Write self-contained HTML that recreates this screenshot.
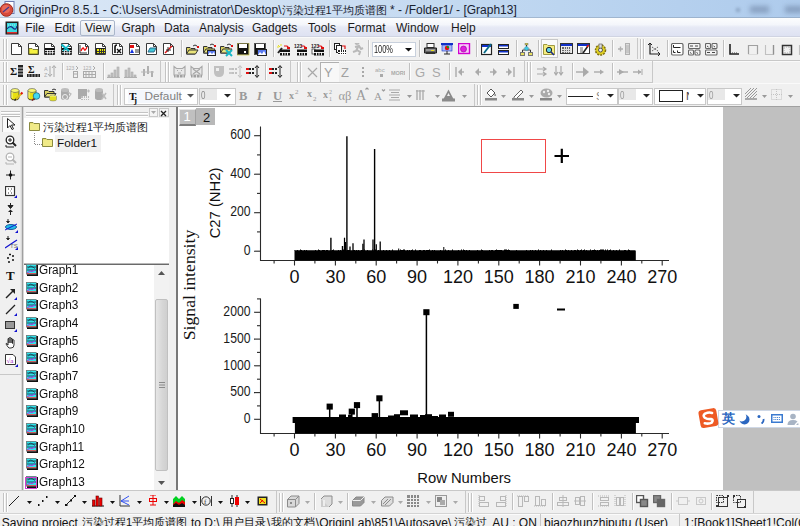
<!DOCTYPE html>
<html><head><meta charset="utf-8"><style>
html,body{margin:0;padding:0;width:800px;height:526px;overflow:hidden;background:#f0f0f0}
body{position:relative;font-family:"Liberation Sans", sans-serif}
div,span,svg{position:absolute;display:block}
span{white-space:nowrap;line-height:1}
</style></head><body>
<div style="left:0px;top:0px;width:800px;height:18px;background:linear-gradient(90deg,#dae7f6 0%,#cfe0f3 35%,#bcd5f0 70%,#aecbec 100%)"></div>
<svg style="left:0px;top:1px;" width="16" height="16" viewBox="0 0 16 16"><rect x="5" y="0.5" width="9" height="12" fill="#fff" stroke="#6a7ab0"/><circle cx="6.5" cy="9" r="6.3" fill="#d84a3a" stroke="#a03020"/><circle cx="6" cy="8" r="4" fill="#e86a5a"/><path d="M3 11L9 6" stroke="#4a3a8a" stroke-width="1.3"/></svg>
<span style="left:18.8px;top:3.5px;font-size:12px;color:#1a2230">OriginPro 8.5.1 - C:\Users\Administrator\Desktop\<span style="position:static;display:inline;font-size:11px">污染过程1平均质谱图</span> * - /Folder1/ - [Graph13]</span>
<div style="left:750px;top:6px;width:19px;height:7px;background:rgba(70,90,120,0.38);filter:blur(2.5px)"></div>
<div style="left:785px;top:6px;width:18px;height:7px;background:rgba(70,90,120,0.38);filter:blur(2.5px)"></div>
<div style="left:736px;top:8px;width:4px;height:4px;background:rgba(60,80,110,0.3);filter:blur(1.5px)"></div>
<div style="left:0px;top:17px;width:800px;height:1px;background:linear-gradient(90deg,#b8c8da,#98b0cc)"></div>
<div style="left:0px;top:18px;width:800px;height:19px;background:linear-gradient(180deg,#fcfdfe 0%,#f4f6fb 35%,#e6e9f5 48%,#dde1f2 100%)"></div>
<div style="left:0px;top:36px;width:800px;height:1px;background:#d0d4e2"></div>
<svg style="left:5px;top:21px;" width="15" height="15" viewBox="0 0 15 15"><rect x="0.5" y="0.5" width="13" height="13" fill="#222"/><rect x="2" y="2" width="10" height="9" fill="#3ad8e0"/><path d="M2 8Q5 4 8 7T12 5" stroke="#1a2a8a" fill="none" stroke-width="1.2"/><path d="M3 4H11" stroke="#fff" stroke-width="0.6" stroke-dasharray="1 1"/><rect x="2" y="11" width="10" height="1.5" fill="#e03030"/></svg>
<div style="left:80px;top:20px;width:35px;height:16px;border:1px solid #aab6ca;border-radius:2px;background:linear-gradient(#f8f9fb,#e2e7ef);box-sizing:border-box"></div>
<span style="left:25.3px;top:22px;font-size:12px;color:#1b1b1b">File</span>
<span style="left:54.4px;top:22px;font-size:12px;color:#1b1b1b">Edit</span>
<span style="left:85px;top:22px;font-size:12px;color:#1b1b1b">View</span>
<span style="left:121.5px;top:22px;font-size:12px;color:#1b1b1b">Graph</span>
<span style="left:164px;top:22px;font-size:12px;color:#1b1b1b">Data</span>
<span style="left:199px;top:22px;font-size:12px;color:#1b1b1b">Analysis</span>
<span style="left:252px;top:22px;font-size:12px;color:#1b1b1b">Gadgets</span>
<span style="left:308px;top:22px;font-size:12px;color:#1b1b1b">Tools</span>
<span style="left:347.5px;top:22px;font-size:12px;color:#1b1b1b">Format</span>
<span style="left:396px;top:22px;font-size:12px;color:#1b1b1b">Window</span>
<span style="left:451px;top:22px;font-size:12px;color:#1b1b1b">Help</span>
<div style="left:0px;top:37px;width:800px;height:70px;background:#f0f0f0"></div>
<div style="left:0px;top:37px;width:800px;height:1px;background:#fafafa"></div>
<div style="left:0px;top:60px;width:800px;height:1px;background:#c8c8c8"></div>
<div style="left:0px;top:61px;width:800px;height:1px;background:#fafafa"></div>
<div style="left:0px;top:82px;width:653px;height:1px;background:#c8c8c8"></div>
<div style="left:653px;top:83px;width:147px;height:1px;background:#e4e4e4"></div>
<div style="left:0px;top:83px;width:800px;height:1px;background:#fafafa"></div>
<div style="left:0px;top:106px;width:800px;height:1px;background:#a0a0a0"></div>
<div style="left:3px;top:39px;width:1px;height:20px;background:#c4c4c4"></div>
<div style="left:4px;top:39px;width:1px;height:20px;background:#fff"></div>
<div style="left:6px;top:39px;width:1px;height:20px;background:#c4c4c4"></div>
<div style="left:7px;top:39px;width:1px;height:20px;background:#fff"></div>
<svg style="left:11px;top:43px;" width="15" height="15" viewBox="0 0 15 15"><path d="M0.5 0.5H7.5L10.5 3.5V11.5H0.5Z" fill="#fff" stroke="#3a3a3a"/><path d="M7.5 0.5V3.5H10.5" fill="none" stroke="#3a3a3a"/></svg>
<svg style="left:28px;top:43px;" width="15" height="15" viewBox="0 0 15 15"><path d="M0.5 0.5H7.5L10.5 3.5V11.5H0.5Z" fill="#fff" stroke="#3a3a3a"/><path d="M7.5 0.5V3.5H10.5" fill="none" stroke="#3a3a3a"/><path d="M1 5.5H4L5 6.5H10V11H1Z" fill="#f4f040" stroke="#6a6a20" stroke-width="0.8"/></svg>
<svg style="left:44px;top:43px;" width="15" height="15" viewBox="0 0 15 15"><path d="M0.5 0.5H7.5L10.5 3.5V11.5H0.5Z" fill="#fff" stroke="#3a3a3a"/><path d="M7.5 0.5V3.5H10.5" fill="none" stroke="#3a3a3a"/><rect x="1" y="5" width="9.5" height="6.5" fill="#111"/><path d="M1 7.5H10.5M1 9.7H10.5M3.5 7V11.5M6 7V11.5M8.5 7V11.5" stroke="#fff" stroke-width="0.8"/></svg>
<svg style="left:61px;top:43px;" width="15" height="15" viewBox="0 0 15 15"><path d="M0.5 0.5H7.5L10.5 3.5V11.5H0.5Z" fill="#fff" stroke="#3a3a3a"/><path d="M7.5 0.5V3.5H10.5" fill="none" stroke="#3a3a3a"/><rect x="1" y="5" width="9.5" height="6.5" fill="#111"/><path d="M1 7.5H10.5M1 9.7H10.5M3.5 7V11.5M6 7V11.5M8.5 7V11.5" stroke="#fff" stroke-width="0.8"/><path d="M0.5 1.5L8 8" stroke="#10b8c8" stroke-width="2.2"/><path d="M2 8L8 2" stroke="#10b8c8" stroke-width="1.4"/></svg>
<svg style="left:78px;top:43px;" width="15" height="15" viewBox="0 0 15 15"><path d="M0.5 0.5H7.5L10.5 3.5V11.5H0.5Z" fill="#fff" stroke="#3a3a3a"/><path d="M7.5 0.5V3.5H10.5" fill="none" stroke="#3a3a3a"/><path d="M2 2V10H9" stroke="#333" fill="none"/><path d="M3 8Q5 3 6 6T9 4" stroke="#e00" fill="none" stroke-width="1.2"/></svg>
<svg style="left:95px;top:43px;" width="15" height="15" viewBox="0 0 15 15"><path d="M0.5 0.5H7.5L10.5 3.5V11.5H0.5Z" fill="#fff" stroke="#3a3a3a"/><path d="M7.5 0.5V3.5H10.5" fill="none" stroke="#3a3a3a"/><rect x="1" y="5" width="9" height="6" fill="#222"/><rect x="2" y="6" width="8" height="5" fill="#f2f200"/><rect x="4" y="6" width="1" height="5" fill="#333"/><rect x="6" y="6" width="1" height="5" fill="#333"/><rect x="8" y="6" width="1" height="5" fill="#333"/><rect x="2" y="8" width="8" height="1" fill="#333"/><rect x="2" y="10" width="8" height="1" fill="#333"/></svg>
<svg style="left:112px;top:43px;" width="15" height="15" viewBox="0 0 15 15"><path d="M0.5 0.5H7.5L10.5 3.5V11.5H0.5Z" fill="#fff" stroke="#3a3a3a"/><path d="M7.5 0.5V3.5H10.5" fill="none" stroke="#3a3a3a"/><path d="M3 10V4Q3 2 5 2" stroke="#111" fill="none" stroke-width="1.6"/><path d="M5 6L9 10M9 6L5 10" stroke="#111" stroke-width="1.4"/></svg>
<svg style="left:129px;top:43px;" width="15" height="15" viewBox="0 0 15 15"><path d="M0.5 0.5H7.5L10.5 3.5V11.5H0.5Z" fill="#fff" stroke="#3a3a3a"/><path d="M7.5 0.5V3.5H10.5" fill="none" stroke="#3a3a3a"/><rect x="1" y="2" width="4" height="3" fill="#e01010"/><path d="M1 10L3 6L5 10Z" fill="#1030e0"/><path d="M6 7H10M6 9H10" stroke="#333"/></svg>
<svg style="left:146px;top:43px;" width="15" height="15" viewBox="0 0 15 15"><path d="M0.5 0.5H7.5L10.5 3.5V11.5H0.5Z" fill="#fff" stroke="#3a3a3a"/><path d="M7.5 0.5V3.5H10.5" fill="none" stroke="#3a3a3a"/><path d="M2 9L4 5H10L8 9Z" fill="#40c8d8" stroke="#2a6a8a"/></svg>
<svg style="left:163px;top:43px;" width="15" height="15" viewBox="0 0 15 15"><path d="M0.5 0.5H7.5L10.5 3.5V11.5H0.5Z" fill="#fff" stroke="#3a3a3a"/><path d="M7.5 0.5V3.5H10.5" fill="none" stroke="#3a3a3a"/><path d="M2 10L9 3" stroke="#e01010" stroke-width="1.4"/><path d="M5 4V9M3 7H8" stroke="#333"/></svg>
<div style="left:181px;top:40px;width:1px;height:17px;background:#c0c0c0"></div>
<div style="left:182px;top:40px;width:1px;height:17px;background:#fdfdfd"></div>
<svg style="left:186px;top:43px;" width="15" height="15" viewBox="0 0 15 15"><path d="M0.5 4.5H4L5 5.5H9V11H0.5Z" fill="#d8d060" stroke="#333"/><path d="M0.5 11L3 7H12L9.5 11Z" fill="#eae47a" stroke="#333"/><path d="M7 3Q9 1 11 3" stroke="#333" fill="none"/><rect x="11" y="3" width="2" height="2" fill="#e01010"/></svg>
<svg style="left:203px;top:43px;" width="15" height="15" viewBox="0 0 15 15"><path d="M0.5 3.5H4L5 4.5H9V10H0.5Z" fill="#d8d060" stroke="#333"/><path d="M0.5 10L3 6H12L9.5 10Z" fill="#eae47a" stroke="#333"/><path d="M7 2Q9 0 11 2" stroke="#333" fill="none"/><rect x="11" y="2" width="2" height="2" fill="#e01010"/><rect x="4.5" y="7.5" width="8" height="5" fill="#5a7af0" stroke="#222"/><path d="M5 12L7 9L9 11L11 9L12 12Z" fill="#fff"/></svg>
<svg style="left:220px;top:43px;" width="15" height="15" viewBox="0 0 15 15"><path d="M0.5 3.5H4L5 4.5H9V10H0.5Z" fill="#d8d060" stroke="#333"/><path d="M0.5 10L3 6H12L9.5 10Z" fill="#eae47a" stroke="#333"/><path d="M7 2Q9 0 11 2" stroke="#333" fill="none"/><rect x="11" y="2" width="2" height="2" fill="#e01010"/><path d="M6 7L12 13M12 7L6 13" stroke="#19b8c8" stroke-width="2"/></svg>
<svg style="left:237px;top:43px;" width="15" height="15" viewBox="0 0 15 15"><rect x="0.5" y="0.5" width="11" height="11" fill="#111" stroke="#555"/><rect x="2" y="1" width="8" height="4" fill="#fff"/><rect x="7" y="8" width="2" height="2" fill="#fff"/><rect x="0" y="0" width="12" height="12" fill="none" stroke="#c8c020" stroke-width="0.6"/></svg>
<svg style="left:254px;top:43px;" width="15" height="15" viewBox="0 0 15 15"><rect x="0.5" y="0.5" width="11" height="11" fill="#111" stroke="#555"/><rect x="2" y="1" width="8" height="4" fill="#fff"/><rect x="3.5" y="6.5" width="9" height="6" fill="#5a7af0" stroke="#222"/><path d="M4 12L6 9L8 11L10 8L12 12Z" fill="#fff"/></svg>
<div style="left:273px;top:40px;width:1px;height:17px;background:#c0c0c0"></div>
<div style="left:274px;top:40px;width:1px;height:17px;background:#fdfdfd"></div>
<svg style="left:277px;top:43px;" width="15" height="15" viewBox="0 0 15 15"><path d="M1 2L3 4M4 1V3M0 4H2" stroke="#e8e020"/><path d="M1 10L5 5" stroke="#222" stroke-width="2"/><rect x="3" y="6.5" width="10" height="6" fill="#111"/><path d="M3 9.5H13M5.5 9V12.5M8 9V12.5M10.5 9V12.5" stroke="#fff" stroke-width="0.9"/><path d="M7 3H10L12 5" stroke="#e01010" fill="none" stroke-width="1.2"/><rect x="10" y="4" width="3" height="2" fill="#e01010"/></svg>
<svg style="left:294px;top:43px;" width="15" height="15" viewBox="0 0 15 15"><text x="0" y="5" font-size="5" font-family="Liberation Sans" font-weight="bold" fill="#222">123</text><rect x="3" y="6.5" width="10" height="6" fill="#111"/><path d="M3 9.5H13M5.5 9V12.5M8 9V12.5M10.5 9V12.5" stroke="#fff" stroke-width="0.9"/><path d="M7 3H10L12 5" stroke="#e01010" fill="none" stroke-width="1.2"/><rect x="10" y="4" width="3" height="2" fill="#e01010"/></svg>
<svg style="left:311px;top:43px;" width="15" height="15" viewBox="0 0 15 15"><text x="0" y="5" font-size="5" font-family="Liberation Sans" font-weight="bold" fill="#222">123</text><rect x="1" y="6" width="3" height="5" fill="#fff" stroke="#222" stroke-width="0.7"/><rect x="3" y="6.5" width="10" height="6" fill="#111"/><path d="M3 9.5H13M5.5 9V12.5M8 9V12.5M10.5 9V12.5" stroke="#fff" stroke-width="0.9"/><path d="M7 3H10L12 5" stroke="#e01010" fill="none" stroke-width="1.2"/><rect x="10" y="4" width="3" height="2" fill="#e01010"/></svg>
<div style="left:329px;top:40px;width:1px;height:17px;background:#c0c0c0"></div>
<div style="left:330px;top:40px;width:1px;height:17px;background:#fdfdfd"></div>
<svg style="left:334px;top:43px;" width="15" height="15" viewBox="0 0 15 15"><rect x="0.5" y="0.5" width="5" height="6" fill="#fff" stroke="#222"/><rect x="2.5" y="2.5" width="5" height="7" fill="#fff" stroke="#222"/><rect x="4" y="7" width="8" height="5" fill="#222"/><rect x="6" y="7" width="1" height="5" fill="#fff"/><rect x="8" y="7" width="1" height="5" fill="#fff"/><rect x="10" y="7" width="1" height="5" fill="#fff"/><rect x="4" y="9" width="8" height="1" fill="#fff"/><rect x="4" y="11" width="8" height="1" fill="#fff"/><path d="M8 3H11V6" stroke="#e01010" fill="none" stroke-width="1.2"/></svg>
<svg style="left:351px;top:43px;" width="15" height="15" viewBox="0 0 15 15"><path d="M6 1a1.5 1.5 0 1 1 0.1 0M4 4L8 3L10 6L12 5M7 4L5 8L2 9M6 7L9 9L8 12" stroke="#b8b8b8" stroke-width="2" fill="none"/></svg>
<div style="left:368px;top:40px;width:1px;height:17px;background:#c0c0c0"></div>
<div style="left:369px;top:40px;width:1px;height:17px;background:#fdfdfd"></div>
<div style="left:371.5px;top:42px;width:44px;height:15px;background:#fff;border:1px solid #c8c8c8;box-sizing:border-box;border-color:#c8d0dc"></div>
<span style="left:374.4px;top:45px;font-size:10px;color:#222;transform:scaleX(0.74);transform-origin:0 0">100%</span>
<svg style="left:405px;top:48px;" width="7" height="4" viewBox="0 0 7 4"><path d="M0 0H7L3.5 3.5Z" fill="#111"/></svg>
<div style="left:419px;top:40px;width:1px;height:17px;background:#c0c0c0"></div>
<div style="left:420px;top:40px;width:1px;height:17px;background:#fdfdfd"></div>
<svg style="left:424px;top:43px;" width="15" height="15" viewBox="0 0 15 15"><rect x="3" y="0.5" width="7" height="4" fill="#fff" stroke="#333"/><path d="M0.5 5H12.5V10H0.5Z" fill="#666" stroke="#222"/><rect x="2" y="6" width="9" height="2" fill="#999"/><rect x="7" y="7" width="3" height="1" fill="#e8e020"/><rect x="2" y="9" width="9" height="2" fill="#333"/></svg>
<svg style="left:441px;top:43px;" width="15" height="15" viewBox="0 0 15 15"><rect x="0" y="0" width="12" height="2" fill="#1030c8"/><rect x="1" y="2" width="10" height="6" fill="#a8b8f8" stroke="#1030c8" stroke-width="0.6"/><circle cx="6" cy="5" r="2.2" fill="#e01010"/><path d="M6 5V2.8A2.2 2.2 0 0 1 8.2 5Z" fill="#10a010"/><path d="M6 8V11M3 11H9" stroke="#222"/></svg>
<svg style="left:458px;top:43px;" width="15" height="15" viewBox="0 0 15 15"><rect x="0.5" y="0.5" width="11" height="10" fill="#f8c8f8" stroke="#d000d0" stroke-width="1.4"/><circle cx="5.5" cy="6" r="3" fill="#e020e0" stroke="#900090" stroke-width="0.6"/></svg>
<div style="left:476px;top:40px;width:1px;height:17px;background:#c0c0c0"></div>
<div style="left:477px;top:40px;width:1px;height:17px;background:#fdfdfd"></div>
<svg style="left:481px;top:43px;" width="15" height="15" viewBox="0 0 15 15"><rect x="0.5" y="1.5" width="10" height="10" fill="#fff" stroke="#222" stroke-width="1.2"/><rect x="1" y="2" width="9" height="2" fill="#1030c8"/><path d="M3 10L10 1" stroke="#0a8ab0" stroke-width="2"/><path d="M3 10L10 1" stroke="#222" stroke-width="0.5"/></svg>
<svg style="left:497px;top:43px;" width="15" height="15" viewBox="0 0 15 15"><rect x="1.5" y="1.5" width="10" height="4" fill="#fff" stroke="#222"/><rect x="2" y="2" width="9" height="1.5" fill="#1030c8"/><rect x="1.5" y="7.5" width="10" height="4" fill="#fff" stroke="#222"/><rect x="2" y="8" width="9" height="1.5" fill="#1030c8"/></svg>
<div style="left:516px;top:40px;width:1px;height:17px;background:#c0c0c0"></div>
<div style="left:517px;top:40px;width:1px;height:17px;background:#fdfdfd"></div>
<svg style="left:520px;top:43px;" width="15" height="15" viewBox="0 0 15 15"><rect x="5" y="0" width="3" height="2" fill="#c8c040" stroke="#777" stroke-width="0.5"/><path d="M6.5 2V5M2.5 9V7H10.5V9" stroke="#333" fill="none"/><path d="M6.5 3L9 5.5L6.5 8L4 5.5Z" fill="#40c8e0" stroke="#2a7a9a" stroke-width="0.5"/><rect x="0.5" y="9.5" width="4" height="3" fill="#e8e060" stroke="#777"/><rect x="8.5" y="9.5" width="4" height="3" fill="#e8e060" stroke="#777"/></svg>
<div style="left:538px;top:40px;width:1px;height:17px;background:#c0c0c0"></div>
<div style="left:539px;top:40px;width:1px;height:17px;background:#fdfdfd"></div>
<div style="left:541px;top:39px;width:17px;height:19px;background:#fafafa;border:1px solid #c8c8c8;box-sizing:border-box"></div>
<svg style="left:543px;top:43px;" width="15" height="15" viewBox="0 0 15 15"><path d="M0.5 1.5H4L5 2.5H11.5V11.5H0.5Z" fill="#f4ec80" stroke="#a09a40"/><circle cx="6" cy="7" r="2.7" fill="#60d0e8" stroke="#222"/><path d="M8 9L11 12" stroke="#1a2a8a" stroke-width="1.6"/></svg>
<svg style="left:560px;top:43px;" width="15" height="15" viewBox="0 0 15 15"><rect x="0.5" y="0.5" width="12" height="10" fill="#eee" stroke="#333"/><rect x="1" y="1" width="11" height="2" fill="#1030c8"/><rect x="2" y="4" width="9" height="6" fill="#666"/><rect x="4" y="4" width="1" height="6" fill="#ddd"/><rect x="6" y="4" width="1" height="6" fill="#ddd"/><rect x="8" y="4" width="1" height="6" fill="#ddd"/><rect x="10" y="4" width="1" height="6" fill="#ddd"/><rect x="2" y="6" width="9" height="1" fill="#ddd"/><rect x="2" y="8" width="9" height="1" fill="#ddd"/></svg>
<svg style="left:577px;top:43px;" width="15" height="15" viewBox="0 0 15 15"><rect x="0.5" y="0.5" width="12" height="10" fill="#fff" stroke="#333"/><rect x="1" y="1" width="11" height="2" fill="#1030c8"/><path d="M3 5H6M3 7H6M3 9H6" stroke="#666"/><path d="M6 10L11 3" stroke="#222" stroke-width="1.6"/><path d="M10 4L11.5 2" stroke="#e01010" stroke-width="1.6"/></svg>
<svg style="left:594px;top:43px;" width="15" height="15" viewBox="0 0 15 15"><circle cx="6.5" cy="7" r="5" fill="#e0d020" stroke="#807010" stroke-width="1.5" stroke-dasharray="2 1"/><circle cx="6.5" cy="7" r="2" fill="#f0f0f0" stroke="#555"/><rect x="5" y="1" width="3" height="4" fill="#ddd" stroke="#555" stroke-width="0.6"/></svg>
<div style="left:612px;top:40px;width:1px;height:17px;background:#c0c0c0"></div>
<div style="left:613px;top:40px;width:1px;height:17px;background:#fdfdfd"></div>
<svg style="left:617px;top:43px;" width="15" height="15" viewBox="0 0 15 15"><path d="M1 6H6M3.5 3.5V8.5" stroke="#b0b0b0" stroke-width="1.4"/><rect x="8.5" y="0.5" width="4" height="11" fill="#ddd" stroke="#b0b0b0"/><path d="M9 3H12M9 5H12M9 7H12M9 9H12" stroke="#b0b0b0"/></svg>
<div style="left:637px;top:38px;width:1px;height:21px;background:#c8c8c8"></div>
<div style="left:640px;top:39px;width:1px;height:20px;background:#c4c4c4"></div>
<div style="left:641px;top:39px;width:1px;height:20px;background:#fff"></div>
<div style="left:643px;top:39px;width:1px;height:20px;background:#c4c4c4"></div>
<div style="left:644px;top:39px;width:1px;height:20px;background:#fff"></div>
<svg style="left:648px;top:43px;" width="15" height="15" viewBox="0 0 15 15"><path d="M2 0V11H12" stroke="#222" fill="none" stroke-width="1.2"/><path d="M0 2L2 0L4 2M10 9L12 11L10 13" stroke="#222" fill="none"/><path d="M4 4L10 8M4 8L10 4" stroke="#444" stroke-dasharray="1 1"/></svg>
<div style="left:667px;top:40px;width:1px;height:17px;background:#c0c0c0"></div>
<div style="left:668px;top:40px;width:1px;height:17px;background:#fdfdfd"></div>
<svg style="left:671px;top:43px;" width="15" height="15" viewBox="0 0 15 15"><rect x="0.5" y="0.5" width="11.5" height="11.5" rx="1.5" fill="#fff" stroke="#666" stroke-width="1.2"/><path d="M2.5 2V4.5H9.5M2.5 7.5V9.5H4.5M6.5 7.5V9.5H9.5" stroke="#222" fill="none"/></svg>
<svg style="left:688px;top:43px;" width="15" height="15" viewBox="0 0 15 15"><rect x="0.5" y="0.5" width="11.5" height="5" rx="1" fill="#f4f4f4" stroke="#666" stroke-width="1.1"/><rect x="0.5" y="7" width="5" height="5" rx="1" fill="#f4f4f4" stroke="#666" stroke-width="1.1"/><rect x="7" y="7" width="5" height="5" rx="1" fill="#f4f4f4" stroke="#666" stroke-width="1.1"/><path d="M2 3H5M7 3H10M2 9.5L3.5 10.5M8.5 9.5L10 10.5" stroke="#333" stroke-width="0.9"/></svg>
<svg style="left:705px;top:43px;" width="15" height="15" viewBox="0 0 15 15"><rect x="0.5" y="0.5" width="5" height="5" rx="1" fill="#f4f4f4" stroke="#666" stroke-width="1.1"/><rect x="7" y="0.5" width="5" height="5" rx="1" fill="#f4f4f4" stroke="#666" stroke-width="1.1"/><rect x="0.5" y="7" width="11.5" height="5" rx="1" fill="#f4f4f4" stroke="#666" stroke-width="1.1"/><path d="M2 3L3.5 4M8.5 3L10 4M2 9.5H5M7 9.5H10" stroke="#333" stroke-width="0.9"/></svg>
<div style="left:723px;top:40px;width:1px;height:17px;background:#c0c0c0"></div>
<div style="left:724px;top:40px;width:1px;height:17px;background:#fdfdfd"></div>
<svg style="left:729px;top:44px;" width="15" height="15" viewBox="0 0 15 15"><path d="M1 0V10H10" stroke="#222" fill="none" stroke-width="1.6"/><path d="M3 9H9" stroke="#444" stroke-dasharray="1 1"/></svg>
<svg style="left:747px;top:44px;" width="15" height="15" viewBox="0 0 15 15"><rect x="1.5" y="1.5" width="9" height="9" fill="none" stroke="#c8c8c8" stroke-dasharray="1 1"/><path d="M1 1.5H11M1.5 1V10M10.5 1V10" stroke="#a0a0a0" stroke-width="1.2"/></svg>
<svg style="left:764px;top:44px;" width="15" height="15" viewBox="0 0 15 15"><path d="M1.5 1V10.5H9.5V1" stroke="#c0c0c0" fill="none" stroke-width="1.1"/><path d="M9.5 1V10.5" stroke="#909090" stroke-width="1.3"/></svg>
<svg style="left:781px;top:44px;" width="15" height="15" viewBox="0 0 15 15"><rect x="1.5" y="1.5" width="9" height="9" fill="none" stroke="#333" stroke-width="1.5"/><rect x="3" y="3" width="6" height="6" fill="none" stroke="#aaa" stroke-dasharray="1 1"/></svg>
<svg style="left:798px;top:44px;" width="15" height="15" viewBox="0 0 15 15"><path d="M1.5 1V10.5H9.5V1" stroke="#c0c0c0" fill="none" stroke-width="1.1"/><path d="M9.5 1V10.5" stroke="#909090" stroke-width="1.3"/></svg>
<div style="left:3px;top:62px;width:1px;height:20px;background:#c4c4c4"></div>
<div style="left:4px;top:62px;width:1px;height:20px;background:#fff"></div>
<div style="left:6px;top:62px;width:1px;height:20px;background:#c4c4c4"></div>
<div style="left:7px;top:62px;width:1px;height:20px;background:#fff"></div>
<svg style="left:10px;top:65px;" width="15" height="15" viewBox="0 0 15 15"><text x="0" y="10" font-size="11" font-family="Liberation Serif" font-weight="bold" fill="#111">Σ</text><rect x="8" y="0" width="5" height="12" fill="#222"/><path d="M8 3H13M8 6H13M8 9H13" stroke="#fff" stroke-width="0.8"/></svg>
<svg style="left:27px;top:65px;" width="15" height="15" viewBox="0 0 15 15"><text x="1" y="8" font-size="10" font-family="Liberation Serif" font-weight="bold" fill="#111">Σ</text><rect x="0" y="9" width="13" height="3" fill="#222"/><path d="M2 9V12M5 9V12M8 9V12M11 9V12" stroke="#fff" stroke-width="0.6"/></svg>
<svg style="left:44px;top:65px;" width="15" height="15" viewBox="0 0 15 15"><text x="0" y="5.5" font-size="5.5" font-family="Liberation Sans" fill="#aaa">A</text><text x="0" y="12" font-size="5.5" font-family="Liberation Sans" fill="#aaa">Z</text><path d="M6 1V11M4 9L6 11.5L8 9M10 12V1M8 3L10 0.5L12 3" stroke="#aaa" fill="none"/></svg>
<div style="left:62px;top:63px;width:1px;height:17px;background:#c0c0c0"></div>
<div style="left:63px;top:63px;width:1px;height:17px;background:#fdfdfd"></div>
<svg style="left:66px;top:65px;" width="15" height="15" viewBox="0 0 15 15"><text x="0" y="4.5" font-size="5" font-family="Liberation Sans" fill="#aaa">123</text><path d="M10 1L12 3L10 5" stroke="#aaa" fill="none"/><rect x="7.5" y="6.5" width="4" height="6" fill="none" stroke="#aaa"/><path d="M8 9H11" stroke="#aaa"/></svg>
<svg style="left:83px;top:65px;" width="15" height="15" viewBox="0 0 15 15"><text x="0" y="4.5" font-size="5" font-family="Liberation Sans" fill="#aaa">123</text><path d="M10 1L12 3L10 5" stroke="#aaa" fill="none"/><rect x="0.5" y="6.5" width="12" height="6" fill="none" stroke="#aaa"/><path d="M3 7V12M6 7V12M9 7V12M1 9.5H12" stroke="#aaa"/></svg>
<div style="left:103px;top:63px;width:1px;height:17px;background:#c0c0c0"></div>
<div style="left:104px;top:63px;width:1px;height:17px;background:#fdfdfd"></div>
<svg style="left:107px;top:65px;" width="15" height="15" viewBox="0 0 15 15"><rect x="1" y="10" width="2" height="2" fill="#c4c4c4" stroke="#a8a8a8" stroke-width="0.6"/><rect x="4" y="8" width="2" height="4" fill="#c4c4c4" stroke="#a8a8a8" stroke-width="0.6"/><rect x="7" y="5" width="2" height="7" fill="#c4c4c4" stroke="#a8a8a8" stroke-width="0.6"/><rect x="10" y="2" width="2" height="10" fill="#c4c4c4" stroke="#a8a8a8" stroke-width="0.6"/><path d="M0 12.5H13" stroke="#b0b0b0"/></svg>
<svg style="left:124px;top:65px;" width="15" height="15" viewBox="0 0 15 15"><rect x="1" y="5" width="2" height="7" fill="#c4c4c4" stroke="#a8a8a8" stroke-width="0.6"/><rect x="4" y="3" width="2" height="9" fill="#c4c4c4" stroke="#a8a8a8" stroke-width="0.6"/><rect x="7" y="7" width="2" height="5" fill="#c4c4c4" stroke="#a8a8a8" stroke-width="0.6"/><rect x="10" y="10" width="2" height="2" fill="#c4c4c4" stroke="#a8a8a8" stroke-width="0.6"/><path d="M0 12.5H13" stroke="#b0b0b0"/></svg>
<svg style="left:141px;top:65px;" width="15" height="15" viewBox="0 0 15 15"><path d="M3 4V11M7 1V9M11 6V12" stroke="#b0b0b0" stroke-width="2"/><path d="M0 7H13" stroke="#b8b8b8"/></svg>
<div style="left:160px;top:61px;width:1px;height:22px;background:#c8c8c8"></div>
<div style="left:165px;top:62px;width:1px;height:20px;background:#c4c4c4"></div>
<div style="left:166px;top:62px;width:1px;height:20px;background:#fff"></div>
<div style="left:168px;top:62px;width:1px;height:20px;background:#c4c4c4"></div>
<div style="left:169px;top:62px;width:1px;height:20px;background:#fff"></div>
<svg style="left:173px;top:65px;" width="15" height="15" viewBox="0 0 15 15"><path d="M1 1.5L3.5 3.5H9.5L12 1.5V10H1Z" fill="#e8e8e8" stroke="#a8a8a8" stroke-width="1.1"/><path d="M1 10H12V12.5H1Z" fill="#a0a0a0"/><path d="M3 10V13M6.5 10V13M10 10V13" stroke="#f0f0f0" stroke-width="0.8"/><path d="M4 5.5H5M8 5.5H9M5 8H8" stroke="#a8a8a8" stroke-width="1.2"/></svg>
<svg style="left:190px;top:65px;" width="15" height="15" viewBox="0 0 15 15"><path d="M1 1.5L3.5 3.5H9.5L12 1.5V10H1Z" fill="#e8e8e8" stroke="#a8a8a8" stroke-width="1.1"/><path d="M1 10H12V12.5H1Z" fill="#a0a0a0"/><path d="M3 10V13M6.5 10V13M10 10V13" stroke="#f0f0f0" stroke-width="0.8"/><path d="M3 4L10 9M10 4L3 9" stroke="#a8a8a8" stroke-width="1.2"/></svg>
<div style="left:208px;top:63px;width:1px;height:17px;background:#c0c0c0"></div>
<div style="left:209px;top:63px;width:1px;height:17px;background:#fdfdfd"></div>
<svg style="left:213px;top:65px;" width="15" height="15" viewBox="0 0 15 15"><path d="M1 1H11V7Q11 12 6 12Q1 12 1 7Z" fill="#c0c0c0"/><rect x="3" y="3" width="3" height="3" fill="#eee"/></svg>
<svg style="left:229px;top:65px;" width="15" height="15" viewBox="0 0 15 15"><path d="M0 4H9M0 8H9" stroke="#c0c0c0" stroke-width="2" stroke-dasharray="2 1"/><rect x="0" y="3" width="3" height="2" fill="#c8c8c8"/><rect x="0" y="7" width="3" height="2" fill="#c8c8c8"/><path d="M11 1V12M9 3L11 0.5L13 3M9 10L11 12.5L13 10" stroke="#c0c0c0" fill="none"/></svg>
<svg style="left:246px;top:65px;" width="15" height="15" viewBox="0 0 15 15"><path d="M0 4H9M0 8H9" stroke="#222" stroke-width="2" stroke-dasharray="2 1"/><rect x="0" y="3" width="3" height="2" fill="#e01010"/><rect x="0" y="7" width="3" height="2" fill="#e01010"/><path d="M11 1V12M9 3L11 0.5L13 3M9 10L11 12.5L13 10" stroke="#222" fill="none"/></svg>
<div style="left:265px;top:63px;width:1px;height:17px;background:#c0c0c0"></div>
<div style="left:266px;top:63px;width:1px;height:17px;background:#fdfdfd"></div>
<svg style="left:269px;top:65px;" width="15" height="15" viewBox="0 0 15 15"><path d="M0 4H9M0 8H9" stroke="#222" stroke-width="2" stroke-dasharray="2 1"/><rect x="0" y="3" width="3" height="2" fill="#e01010"/><rect x="0" y="7" width="3" height="2" fill="#e01010"/><path d="M11 1V12M9 3L11 0.5L13 3M9 10L11 12.5L13 10" stroke="#222" fill="none"/></svg>
<div style="left:290px;top:61px;width:1px;height:22px;background:#c8c8c8"></div>
<div style="left:297px;top:62px;width:1px;height:20px;background:#c4c4c4"></div>
<div style="left:298px;top:62px;width:1px;height:20px;background:#fff"></div>
<div style="left:300px;top:62px;width:1px;height:20px;background:#c4c4c4"></div>
<div style="left:301px;top:62px;width:1px;height:20px;background:#fff"></div>
<svg style="left:307px;top:67px;" width="11" height="11" viewBox="0 0 11 11"><path d="M1 1L10 10M10 1L1 10" stroke="#a8a8a8" stroke-width="1.2"/></svg>
<div style="left:320px;top:62px;width:19px;height:20px;background:#f8f8f8;border-left:1px solid #b0b0b0;border-top:1px solid #b0b0b0;box-sizing:border-box"></div>
<span style="left:324px;top:66px;font-size:13px;color:#a0a0a0">Y</span>
<span style="left:341px;top:66px;font-size:13px;color:#a0a0a0">Z</span>
<svg style="left:361px;top:66px;" width="5" height="12" viewBox="0 0 5 12"><path d="M2 1V3M2 5V7M2 9V11" stroke="#a8a8a8" stroke-width="2"/></svg>
<svg style="left:375px;top:66px;" width="14" height="13" viewBox="0 0 14 13"><text x="0" y="6" font-size="6" font-family="Liberation Sans" fill="#aaa">abc</text><rect x="5" y="8" width="3" height="3" fill="#aaa"/></svg>
<svg style="left:391px;top:68px;" width="14" height="10" viewBox="0 0 14 10"><text x="0" y="7" font-size="5.5" font-family="Liberation Sans" font-weight="bold" fill="#aaa">MORE</text></svg>
<div style="left:409px;top:63px;width:1px;height:17px;background:#c0c0c0"></div>
<div style="left:410px;top:63px;width:1px;height:17px;background:#fdfdfd"></div>
<span style="left:415px;top:66px;font-size:13px;color:#a8a8a8">G</span>
<span style="left:432px;top:66px;font-size:13px;color:#a8a8a8">S</span>
<div style="left:449px;top:63px;width:1px;height:17px;background:#c0c0c0"></div>
<div style="left:450px;top:63px;width:1px;height:17px;background:#fdfdfd"></div>
<svg style="left:455px;top:66px;" width="15" height="15" viewBox="0 0 15 15"><path d="M1 1V11" stroke="#aaa" stroke-width="1.4"/><path d="M3 6L7 2V10Z" fill="#aaa"/><path d="M6 6H9" stroke="#aaa" stroke-width="1.4"/></svg>
<svg style="left:474px;top:66px;" width="15" height="15" viewBox="0 0 15 15"><path d="M1 6L5 2V10Z" fill="#aaa"/><path d="M4 6H7" stroke="#aaa" stroke-width="1.4"/></svg>
<svg style="left:490px;top:66px;" width="15" height="15" viewBox="0 0 15 15"><path d="M7 6L3 2V10Z" fill="#aaa"/><path d="M0 6H4" stroke="#aaa" stroke-width="1.4"/></svg>
<svg style="left:506px;top:66px;" width="15" height="15" viewBox="0 0 15 15"><path d="M8 1V11" stroke="#aaa" stroke-width="1.4"/><path d="M6 6L2 2V10Z" fill="#aaa"/><path d="M0 6H3" stroke="#aaa" stroke-width="1.4"/></svg>
<div style="left:524px;top:61px;width:1px;height:22px;background:#c8c8c8"></div>
<div style="left:527px;top:62px;width:1px;height:20px;background:#c4c4c4"></div>
<div style="left:528px;top:62px;width:1px;height:20px;background:#fff"></div>
<div style="left:530px;top:62px;width:1px;height:20px;background:#c4c4c4"></div>
<div style="left:531px;top:62px;width:1px;height:20px;background:#fff"></div>
<svg style="left:537px;top:66px;" width="15" height="15" viewBox="0 0 15 15"><path d="M0 3H8M0 8H8M6 1L9 3L6 5M6 6L9 8L6 10" stroke="#aaa" fill="none" stroke-width="1.2"/></svg>
<svg style="left:554px;top:66px;" width="15" height="15" viewBox="0 0 15 15"><path d="M2 0V9M7 0V9M0 6L2 9L4 6M5 6L7 9L9 6" stroke="#aaa" fill="none" stroke-width="1.2"/></svg>
<div style="left:572px;top:63px;width:1px;height:17px;background:#c0c0c0"></div>
<div style="left:573px;top:63px;width:1px;height:17px;background:#fdfdfd"></div>
<svg style="left:576px;top:66px;" width="15" height="15" viewBox="0 0 15 15"><path d="M0 6H8" stroke="#aaa" stroke-width="1.4"/><path d="M7 1L13 6L7 11Z" fill="#aaa"/></svg>
<svg style="left:594px;top:66px;" width="15" height="15" viewBox="0 0 15 15"><path d="M0 6H7" stroke="#aaa" stroke-width="1.4"/><path d="M6 3.5L10 6L6 8.5Z" fill="#aaa"/></svg>
<div style="left:612px;top:63px;width:1px;height:17px;background:#c0c0c0"></div>
<div style="left:613px;top:63px;width:1px;height:17px;background:#fdfdfd"></div>
<svg style="left:617px;top:66px;" width="15" height="15" viewBox="0 0 15 15"><path d="M0 6H11" stroke="#aaa" stroke-width="1.4"/><path d="M2 3L7 6L2 9Z" fill="#aaa"/></svg>
<svg style="left:633px;top:66px;" width="15" height="15" viewBox="0 0 15 15"><path d="M0 6H8" stroke="#aaa" stroke-width="1.4"/><path d="M5 3.5L8.5 6L5 8.5Z" fill="#aaa"/><path d="M9 3V9" stroke="#aaa"/></svg>
<div style="left:652px;top:61px;width:1px;height:22px;background:#c8c8c8"></div>
<div style="left:3px;top:85px;width:1px;height:20px;background:#c4c4c4"></div>
<div style="left:4px;top:85px;width:1px;height:20px;background:#fff"></div>
<div style="left:6px;top:85px;width:1px;height:20px;background:#c4c4c4"></div>
<div style="left:7px;top:85px;width:1px;height:20px;background:#fff"></div>
<svg style="left:10px;top:88px;" width="15" height="15" viewBox="0 0 15 15"><path d="M1 2.5V10A4 2 0 0 0 9 10V2.5" fill="#e8e010" stroke="#333" stroke-width="0.8"/><ellipse cx="5" cy="2.5" rx="4" ry="2" fill="#f8f870" stroke="#555" stroke-width="0.6"/><path d="M2 4V10" stroke="#fafa90" stroke-width="1"/><path d="M5 12L12 5" stroke="#d8c020" stroke-width="2"/><path d="M11 6L12.5 4.5" stroke="#e01010" stroke-width="2"/><path d="M4.5 12.5L6 11" stroke="#222" stroke-width="1.5"/></svg>
<svg style="left:27px;top:88px;" width="15" height="15" viewBox="0 0 15 15"><path d="M1 2.5V10A4 2 0 0 0 9 10V2.5" fill="#e8e010" stroke="#333" stroke-width="0.8"/><ellipse cx="5" cy="2.5" rx="4" ry="2" fill="#f8f870" stroke="#555" stroke-width="0.6"/><path d="M2 4V10" stroke="#fafa90" stroke-width="1"/><circle cx="9.5" cy="8" r="3.3" fill="#40d8f0" stroke="#1a6a8a" stroke-width="0.8"/><path d="M7 10.5L5 12.5" stroke="#802020" stroke-width="1.5"/></svg>
<svg style="left:44px;top:88px;" width="15" height="15" viewBox="0 0 15 15"><path d="M0.5 2.5H4L5 3.5H10V9H0.5Z" fill="#d8d060" stroke="#333"/><path d="M0.5 9L3 5.5H12L9.5 9Z" fill="#eae47a" stroke="#333"/><path d="M8 2Q10 0 12 2" stroke="#333" fill="none"/><ellipse cx="9" cy="8.5" rx="3.5" ry="1.5" fill="#f8f880" stroke="#777" stroke-width="0.5"/><path d="M5.5 8.5V11.5A3.5 1.5 0 0 0 12.5 11.5V8.5" fill="#e4e020" stroke="#777" stroke-width="0.5"/></svg>
<svg style="left:60px;top:88px;" width="15" height="15" viewBox="0 0 15 15"><path d="M1 2V10A4 2 0 0 0 9 10V2" fill="#aaaaaa"/><ellipse cx="5" cy="2" rx="4" ry="2" fill="#bcbcbc"/><path d="M8 4L11 6L9 9" stroke="#bbb" fill="none" stroke-width="1.2"/><circle cx="5" cy="9" r="2.5" fill="none" stroke="#eee"/></svg>
<svg style="left:77px;top:88px;" width="15" height="15" viewBox="0 0 15 15"><rect x="1" y="1" width="9" height="10" fill="#aaaaaa"/><path d="M10 3H13M11.5 1.5V4.5" stroke="#bbb" stroke-width="1.2"/><rect x="4" y="8" width="9" height="4" fill="#bbb"/><rect x="6" y="8" width="1" height="4" fill="#eee"/><rect x="8" y="8" width="1" height="4" fill="#eee"/><rect x="10" y="8" width="1" height="4" fill="#eee"/><rect x="12" y="8" width="1" height="4" fill="#eee"/><rect x="4" y="10" width="9" height="1" fill="#eee"/></svg>
<svg style="left:94px;top:88px;" width="15" height="15" viewBox="0 0 15 15"><path d="M1 2V10A4 2 0 0 0 9 10V2" fill="#aaaaaa"/><ellipse cx="5" cy="2" rx="4" ry="2" fill="#bcbcbc"/><path d="M8 5L12 11M12 5L8 11" stroke="#bbb" stroke-width="1.5"/></svg>
<div style="left:113px;top:84px;width:1px;height:22px;background:#c8c8c8"></div>
<div style="left:117px;top:85px;width:1px;height:20px;background:#c4c4c4"></div>
<div style="left:118px;top:85px;width:1px;height:20px;background:#fff"></div>
<div style="left:120px;top:85px;width:1px;height:20px;background:#c4c4c4"></div>
<div style="left:121px;top:85px;width:1px;height:20px;background:#fff"></div>
<div style="left:124px;top:88px;width:74px;height:17px;background:#fff;border:1px solid #c8c8c8;box-sizing:border-box;"></div>
<div style="left:128px;top:90px;width:53px;height:13px;background:#f4f7fc"></div>
<svg style="left:129px;top:90px;" width="15" height="15" viewBox="0 0 15 15"><text x="0" y="10" font-size="11" font-family="Liberation Serif" font-weight="bold" fill="#111">T</text><text x="5" y="13" font-size="9" font-family="Liberation Serif" font-weight="bold" fill="#111">j</text></svg>
<span style="left:144.5px;top:90.5px;font-size:11.8px;color:#808080">Default</span>
<svg style="left:187px;top:94px;" width="7" height="4" viewBox="0 0 7 4"><path d="M0 0H7L3.5 3.5Z" fill="#555"/></svg>
<div style="left:199px;top:88px;width:37px;height:17px;background:#fff;border:1px solid #c8c8c8;box-sizing:border-box;"></div>
<div style="left:200px;top:89px;width:17px;height:11px;background:#e8e8e8"></div>
<span style="left:200.7px;top:90.5px;font-size:10px;color:#888;transform:scaleX(0.8);transform-origin:0 0">0</span>
<svg style="left:224px;top:94px;" width="7" height="4" viewBox="0 0 7 4"><path d="M0 0H7L3.5 3.5Z" fill="#222"/></svg>
<span style="left:239px;top:89.5px;font-size:12.5px;font-family:'Liberation Serif';font-weight:bold;color:#9a9a9a">B</span>
<span style="left:257px;top:89.5px;font-size:12.5px;font-family:'Liberation Serif';font-style:italic;font-weight:bold;color:#9a9a9a">I</span>
<span style="left:273px;top:89.5px;font-size:12.5px;font-family:'Liberation Serif';font-weight:bold;color:#9a9a9a;text-decoration:underline">U</span>
<svg style="left:289px;top:88px;" width="13" height="14" viewBox="0 0 13 14"><text x="0" y="11" font-size="10" font-family="Liberation Serif" font-weight="bold" fill="#9a9a9a">x</text><text x="6" y="6" font-size="7" font-family="Liberation Serif" fill="#9a9a9a">2</text></svg>
<svg style="left:307px;top:88px;" width="13" height="15" viewBox="0 0 13 15"><text x="0" y="9" font-size="10" font-family="Liberation Serif" font-weight="bold" fill="#9a9a9a">x</text><text x="6" y="13" font-size="7" font-family="Liberation Serif" fill="#9a9a9a">2</text></svg>
<svg style="left:323px;top:88px;" width="13" height="15" viewBox="0 0 13 15"><text x="0" y="10" font-size="10" font-family="Liberation Serif" font-weight="bold" fill="#9a9a9a">x</text><text x="6" y="6" font-size="6" font-family="Liberation Serif" fill="#9a9a9a">2</text><text x="6" y="13" font-size="6" font-family="Liberation Serif" fill="#9a9a9a">1</text></svg>
<span style="left:338.5px;top:90px;font-size:12.5px;font-family:'Liberation Serif';color:#9a9a9a">αβ</span>
<svg style="left:356px;top:87px;" width="14" height="15" viewBox="0 0 14 15"><text x="0" y="13" font-size="14" font-family="Liberation Serif" fill="#9a9a9a">A</text><path d="M9.5 2.5L11 1L12.5 2.5" stroke="#9a9a9a" fill="none" stroke-width="1.2"/></svg>
<svg style="left:374px;top:88px;" width="12" height="14" viewBox="0 0 12 14"><text x="0" y="12" font-size="11" font-family="Liberation Serif" fill="#9a9a9a">A</text><path d="M8 1.5L9.5 3L11 1.5" stroke="#9a9a9a" fill="none" stroke-width="1.2"/></svg>
<svg style="left:389px;top:89px;" width="12" height="12" viewBox="0 0 12 12"><path d="M0 1H11M2 3.5H10M0 6H11M2 8.5H10M0 11H11" stroke="#a8a8a8"/></svg>
<svg style="left:407px;top:95px;" width="5" height="3" viewBox="0 0 5 3"><path d="M0 0H5L2.5 3Z" fill="#999"/></svg>
<svg style="left:416px;top:89px;" width="10" height="12" viewBox="0 0 10 12"><path d="M1 1V11M4 1V11M7 1V11" stroke="#a8a8a8" stroke-width="1.3"/><path d="M0 2H9" stroke="#a8a8a8"/></svg>
<svg style="left:435px;top:95px;" width="5" height="3" viewBox="0 0 5 3"><path d="M0 0H5L2.5 3Z" fill="#999"/></svg>
<svg style="left:442px;top:88px;" width="14" height="14" viewBox="0 0 14 14"><path d="M1.5 11L6.5 1.5L11.5 11Z" fill="#8a8a8a"/><path d="M5 8L6.5 5L8 8Z" fill="#f0f0f0"/><rect x="0" y="10.5" width="13" height="3" fill="#8a8a8a"/></svg>
<svg style="left:462px;top:95px;" width="5" height="3" viewBox="0 0 5 3"><path d="M0 0H5L2.5 3Z" fill="#999"/></svg>
<div style="left:474px;top:84px;width:1px;height:22px;background:#c8c8c8"></div>
<div style="left:477px;top:85px;width:1px;height:20px;background:#c4c4c4"></div>
<div style="left:478px;top:85px;width:1px;height:20px;background:#fff"></div>
<div style="left:480px;top:85px;width:1px;height:20px;background:#c4c4c4"></div>
<div style="left:481px;top:85px;width:1px;height:20px;background:#fff"></div>
<svg style="left:485px;top:88px;" width="15" height="15" viewBox="0 0 15 15"><path d="M2 5L6 1L10 5L6 9Z" fill="#fff" stroke="#555"/><path d="M9 5Q11 7 10 8" stroke="#555" fill="none"/><rect x="0" y="10" width="12" height="2.5" fill="#888"/></svg>
<svg style="left:501px;top:95px;" width="5" height="3" viewBox="0 0 5 3"><path d="M0 0H5L2.5 3Z" fill="#999"/></svg>
<svg style="left:512px;top:88px;" width="15" height="15" viewBox="0 0 15 15"><path d="M2 9L9 2L11 4L4 11H2Z" fill="#fff" stroke="#666"/><rect x="0" y="10" width="12" height="2.5" fill="#888"/></svg>
<svg style="left:529px;top:95px;" width="5" height="3" viewBox="0 0 5 3"><path d="M0 0H5L2.5 3Z" fill="#999"/></svg>
<svg style="left:540px;top:88px;" width="15" height="15" viewBox="0 0 15 15"><ellipse cx="6.5" cy="5" rx="6" ry="4.5" fill="#aaa"/><circle cx="4" cy="4" r="1.2" fill="#eee"/><circle cx="8" cy="3" r="1.2" fill="#eee"/><circle cx="9" cy="6" r="1.2" fill="#eee"/><rect x="0" y="10" width="12" height="2.5" fill="#888"/></svg>
<svg style="left:557px;top:95px;" width="5" height="3" viewBox="0 0 5 3"><path d="M0 0H5L2.5 3Z" fill="#999"/></svg>
<div style="left:566px;top:88px;width:52px;height:17px;background:#fff;border:1px solid #c8c8c8;box-sizing:border-box;"></div>
<div style="left:568px;top:96px;width:25px;height:1px;background:#222"></div>
<span style="left:596px;top:90.5px;font-size:11px;color:#888;width:3px;overflow:hidden">S</span>
<svg style="left:607px;top:94px;" width="7" height="4" viewBox="0 0 7 4"><path d="M0 0H7L3.5 3.5Z" fill="#222"/></svg>
<div style="left:618px;top:88px;width:35px;height:17px;background:#fff;border:1px solid #c8c8c8;box-sizing:border-box;"></div>
<div style="left:619px;top:89px;width:17px;height:11px;background:#e8e8e8"></div>
<span style="left:620px;top:90.5px;font-size:10px;color:#999;transform:scaleX(0.8);transform-origin:0 0">0</span>
<svg style="left:643px;top:94px;" width="7" height="4" viewBox="0 0 7 4"><path d="M0 0H7L3.5 3.5Z" fill="#222"/></svg>
<div style="left:654px;top:88px;width:52px;height:17px;background:#fff;border:1px solid #c8c8c8;box-sizing:border-box;"></div>
<div style="left:659px;top:90px;width:24px;height:12px;border:1.5px solid #222;box-sizing:border-box"></div>
<span style="left:686px;top:90.5px;font-size:11px;color:#444;width:3px;overflow:hidden">N</span>
<svg style="left:697px;top:94px;" width="7" height="4" viewBox="0 0 7 4"><path d="M0 0H7L3.5 3.5Z" fill="#222"/></svg>
<div style="left:707px;top:88px;width:35px;height:17px;background:#fff;border:1px solid #c8c8c8;box-sizing:border-box;"></div>
<div style="left:708px;top:89px;width:17px;height:11px;background:#e8e8e8"></div>
<span style="left:709px;top:90.5px;font-size:10px;color:#999;transform:scaleX(0.8);transform-origin:0 0">0</span>
<svg style="left:733px;top:94px;" width="7" height="4" viewBox="0 0 7 4"><path d="M0 0H7L3.5 3.5Z" fill="#222"/></svg>
<svg style="left:745px;top:88px;" width="15" height="15" viewBox="0 0 15 15"><path d="M0 6L6 0M0 9L9 0M1 11L12 0M4 11L12 3M7 11L12 6" stroke="#999"/><rect x="0" y="10" width="12" height="2" fill="#aaa"/></svg>
<svg style="left:762px;top:95px;" width="5" height="3" viewBox="0 0 5 3"><path d="M0 0H5L2.5 3Z" fill="#999"/></svg>
<svg style="left:771px;top:89px;" width="15" height="15" viewBox="0 0 15 15"><rect x="0.5" y="0.5" width="10" height="10" fill="none" stroke="#c4c4c4" stroke-dasharray="1 1"/><path d="M5.5 0V11M0 5.5H11" stroke="#c4c4c4" stroke-dasharray="1 1"/></svg>
<svg style="left:788px;top:95px;" width="5" height="3" viewBox="0 0 5 3"><path d="M0 0H5L2.5 3Z" fill="#999"/></svg>
<div style="left:0px;top:107px;width:800px;height:383px;background:#f0f0f0"></div>
<div style="left:1px;top:111px;width:19px;height:1px;background:#c4c4c4"></div>
<div style="left:1px;top:112px;width:19px;height:1px;background:#fff"></div>
<div style="left:1px;top:114px;width:19px;height:1px;background:#c4c4c4"></div>
<div style="left:1px;top:115px;width:19px;height:1px;background:#fff"></div>
<div style="left:20px;top:107px;width:1px;height:268px;background:#e8e8e8"></div>
<div style="left:21px;top:107px;width:1px;height:383px;background:#d8d8d8"></div>
<div style="left:22px;top:107px;width:1px;height:383px;background:#a0a0a0"></div>
<div style="left:23px;top:107px;width:1px;height:383px;background:#d8d8d8"></div>
<div style="left:0px;top:374px;width:21px;height:1px;background:#c8c8c8"></div>
<div style="left:2px;top:116px;width:18px;height:16px;background:#f9f9f9;border-left:1px solid #b8b8b8;border-top:1px solid #b8b8b8;box-sizing:border-box"></div>
<svg style="left:6px;top:118px;" width="15" height="15" viewBox="0 0 15 15"><path d="M1.5 0.5V10L4 7.5L6 11.5L7.5 10.8L5.5 7H9Z" fill="#fff" stroke="#222"/></svg>
<svg style="left:5px;top:135px;" width="15" height="15" viewBox="0 0 15 15"><circle cx="5" cy="5" r="3.8" fill="#fff" stroke="#222" stroke-width="1.3"/><path d="M5 3V7M3 5H7" stroke="#222"/><path d="M7.5 7.5L11 11" stroke="#222" stroke-width="2"/><path d="M1 10V12H9" stroke="#222" fill="none"/></svg>
<svg style="left:5px;top:152px;" width="15" height="15" viewBox="0 0 15 15"><circle cx="5" cy="5" r="3.8" fill="#fff" stroke="#b4b4b4" stroke-width="1.3"/><path d="M3 5H7" stroke="#b4b4b4"/><path d="M7.5 7.5L11 11" stroke="#b4b4b4" stroke-width="2"/><path d="M1 10V12H9" stroke="#b4b4b4" fill="none"/></svg>
<svg style="left:5px;top:169px;" width="15" height="15" viewBox="0 0 15 15"><path d="M5.5 1.5V10.5M1 6H10" stroke="#222"/><circle cx="5.5" cy="6" r="1.8" fill="#111"/></svg>
<svg style="left:5px;top:186px;" width="15" height="15" viewBox="0 0 15 15"><rect x="0.5" y="0.5" width="9" height="9" fill="#fff" stroke="#333" stroke-width="1.2"/><path d="M3 3H4M6 3H7M3 7H4M6 7H7M5 5H5.5" stroke="#333"/><path d="M12 9V12H9Z" fill="#1010d0"/></svg>
<svg style="left:5px;top:203px;" width="15" height="15" viewBox="0 0 15 15"><path d="M5.5 0V4M3 2.5L5.5 5.5L8 2.5Z" fill="#222" stroke="#222"/><path d="M3 9L5.5 6.5L8 9Z" fill="#222"/><path d="M5.5 9V12" stroke="#222"/></svg>
<svg style="left:5px;top:219px;" width="15" height="15" viewBox="0 0 15 15"><path d="M3 0V3M1.5 2L3 4L4.5 2" stroke="#222" fill="#222"/><ellipse cx="6" cy="8" rx="5.5" ry="2.5" fill="#20c0e8" stroke="#1a5aa0"/><path d="M0 11L12 5" stroke="#1010d0"/><path d="M13 11V14H10Z" fill="#1010d0"/></svg>
<svg style="left:5px;top:236px;" width="15" height="15" viewBox="0 0 15 15"><path d="M3 0V3M1.5 2L3 4L4.5 2" stroke="#222" fill="#222"/><path d="M0 12L12 4" stroke="#1010d0" stroke-width="1.2"/><text x="5" y="12" font-size="6" font-family="Liberation Sans" fill="#666">TS</text><path d="M13 11V14H10Z" fill="#1010d0"/></svg>
<svg style="left:5px;top:253px;" width="15" height="15" viewBox="0 0 15 15"><path d="M4 1.5H6M7 3H9M2 5H4M7 7H9M3 9H5" stroke="#111" stroke-width="1.3"/></svg>
<svg style="left:5px;top:270px;" width="15" height="15" viewBox="0 0 15 15"><text x="1" y="10" font-size="13" font-family="Liberation Serif" font-weight="bold" fill="#111">T</text></svg>
<svg style="left:5px;top:287px;" width="15" height="15" viewBox="0 0 15 15"><path d="M1 11L9 3" stroke="#222" stroke-width="1.4"/><path d="M5 2H10V7Z" fill="#222"/><path d="M12 10V13H9Z" fill="#1010d0"/></svg>
<svg style="left:5px;top:304px;" width="15" height="15" viewBox="0 0 15 15"><path d="M1 10L10 1" stroke="#222" stroke-width="1.2"/><path d="M12 9V12H9Z" fill="#1010d0"/></svg>
<svg style="left:5px;top:321px;" width="15" height="15" viewBox="0 0 15 15"><rect x="0.5" y="0.5" width="9" height="7" fill="#999" stroke="#333"/><path d="M12 8V11H9Z" fill="#1010d0"/></svg>
<svg style="left:5px;top:337px;" width="15" height="15" viewBox="0 0 15 15"><path d="M3 10L1 7Q1 6 2 6.5L3 8V2Q3 1 4 1.5V6V1Q5 0 6 1V6V1.5Q7 1 7.5 2V6.5V3Q8.5 2.5 9 3V8Q9 11 6 11H4Z" fill="#fff" stroke="#222" stroke-width="0.9"/></svg>
<svg style="left:5px;top:354px;" width="15" height="15" viewBox="0 0 15 15"><path d="M0.5 0.5H8L10.5 3V10.5H0.5Z" fill="#fff" stroke="#333"/><text x="1.5" y="8.5" font-size="7" font-family="Liberation Serif" fill="#a020c0">√a</text><path d="M13 10V13H10Z" fill="#1010d0"/></svg>
<div style="left:26px;top:112px;width:122px;height:1px;background:#c4c4c4"></div>
<div style="left:26px;top:113px;width:122px;height:1px;background:#fff"></div>
<div style="left:26px;top:115px;width:122px;height:1px;background:#c4c4c4"></div>
<div style="left:26px;top:116px;width:122px;height:1px;background:#fff"></div>
<div style="left:149px;top:108px;width:9px;height:9px;background:#f4f4f4;border:1px solid #c8c8c8;box-sizing:border-box"></div>
<svg style="left:151px;top:111px;" width="5" height="3" viewBox="0 0 5 3"><path d="M0 0H5L2.5 3Z" fill="#aaa"/></svg>
<div style="left:159px;top:108px;width:10px;height:9px;background:#f4f4f4;border:1px solid #c8c8c8;box-sizing:border-box"></div>
<svg style="left:160px;top:110px;" width="7" height="7" viewBox="0 0 7 7"><path d="M1 1L6 6M6 1L1 6" stroke="#222" stroke-width="1.3"/></svg>
<div style="left:24px;top:118px;width:145px;height:146px;background:#fff"></div>
<svg style="left:29px;top:121px;" width="15" height="15" viewBox="0 0 15 15"><path d="M0.5 1.5H4L5 2.5H10.5V9.5H0.5Z" fill="#e8e070" stroke="#8a8a40"/><rect x="1" y="3" width="9" height="6" fill="#f0ea88"/></svg>
<span style="left:43px;top:121.5px;font-size:10.9px;color:#1a1a1a">污染过程1平均质谱图</span>
<svg style="left:33px;top:133px;" width="10" height="13" viewBox="0 0 10 13"><path d="M1.5 0V11.5H9" stroke="#888" stroke-dasharray="1 1" fill="none"/></svg>
<div style="left:55px;top:135px;width:46px;height:17px;background:#f0f0f0"></div>
<svg style="left:42px;top:137px;" width="15" height="15" viewBox="0 0 15 15"><path d="M0.5 1.5H4L5 2.5H10.5V9.5H0.5Z" fill="#e8e070" stroke="#8a8a40"/><rect x="1" y="3" width="9" height="6" fill="#f0ea88"/></svg>
<span style="left:57px;top:137.5px;font-size:11.8px;color:#111">Folder1</span>
<div style="left:24px;top:263px;width:145px;height:1px;background:#b8b8b8"></div>
<div style="left:24px;top:264px;width:145px;height:1px;background:#6a6a6a"></div>
<div style="left:24px;top:265px;width:130px;height:225px;background:#fff"></div>
<svg style="left:26px;top:264px;" width="12" height="12" viewBox="0 0 12 12"><rect x="1" y="1" width="11" height="11" fill="#111"/><rect x="0" y="0" width="10.5" height="10.5" fill="#777"/><rect x="0.8" y="0.8" width="9.2" height="9" fill="#30e4ec"/><path d="M1 3H10M1 6H10" stroke="#1a3a4a" stroke-width="0.9"/><path d="M2 4.5L4 2L6 2.5L9 4.5" stroke="#1a3a4a" fill="none" stroke-width="0.8"/><path d="M1 9L4 7L6 7.5L9 6" stroke="#b030e0" fill="none" stroke-width="1"/><rect x="0.8" y="9" width="9.2" height="0.9" fill="#e05050"/></svg>
<span style="left:39px;top:264.5px;font-size:11.8px;color:#111;transform:scaleY(1.06);transform-origin:0 100%">Graph1</span>
<svg style="left:26px;top:282px;" width="12" height="12" viewBox="0 0 12 12"><rect x="1" y="1" width="11" height="11" fill="#111"/><rect x="0" y="0" width="10.5" height="10.5" fill="#777"/><rect x="0.8" y="0.8" width="9.2" height="9" fill="#30e4ec"/><path d="M1 3H10M1 6H10" stroke="#1a3a4a" stroke-width="0.9"/><path d="M2 4.5L4 2L6 2.5L9 4.5" stroke="#1a3a4a" fill="none" stroke-width="0.8"/><path d="M1 9L4 7L6 7.5L9 6" stroke="#b030e0" fill="none" stroke-width="1"/><rect x="0.8" y="9" width="9.2" height="0.9" fill="#e05050"/></svg>
<span style="left:39px;top:282.5px;font-size:11.8px;color:#111;transform:scaleY(1.06);transform-origin:0 100%">Graph2</span>
<svg style="left:26px;top:299px;" width="12" height="12" viewBox="0 0 12 12"><rect x="1" y="1" width="11" height="11" fill="#111"/><rect x="0" y="0" width="10.5" height="10.5" fill="#777"/><rect x="0.8" y="0.8" width="9.2" height="9" fill="#30e4ec"/><path d="M1 3H10M1 6H10" stroke="#1a3a4a" stroke-width="0.9"/><path d="M2 4.5L4 2L6 2.5L9 4.5" stroke="#1a3a4a" fill="none" stroke-width="0.8"/><path d="M1 9L4 7L6 7.5L9 6" stroke="#b030e0" fill="none" stroke-width="1"/><rect x="0.8" y="9" width="9.2" height="0.9" fill="#e05050"/></svg>
<span style="left:39px;top:299.5px;font-size:11.8px;color:#111;transform:scaleY(1.06);transform-origin:0 100%">Graph3</span>
<svg style="left:26px;top:317px;" width="12" height="12" viewBox="0 0 12 12"><rect x="1" y="1" width="11" height="11" fill="#111"/><rect x="0" y="0" width="10.5" height="10.5" fill="#777"/><rect x="0.8" y="0.8" width="9.2" height="9" fill="#30e4ec"/><path d="M1 3H10M1 6H10" stroke="#1a3a4a" stroke-width="0.9"/><path d="M2 4.5L4 2L6 2.5L9 4.5" stroke="#1a3a4a" fill="none" stroke-width="0.8"/><path d="M1 9L4 7L6 7.5L9 6" stroke="#b030e0" fill="none" stroke-width="1"/><rect x="0.8" y="9" width="9.2" height="0.9" fill="#e05050"/></svg>
<span style="left:39px;top:317.5px;font-size:11.8px;color:#111;transform:scaleY(1.06);transform-origin:0 100%">Graph4</span>
<svg style="left:26px;top:335px;" width="12" height="12" viewBox="0 0 12 12"><rect x="1" y="1" width="11" height="11" fill="#111"/><rect x="0" y="0" width="10.5" height="10.5" fill="#777"/><rect x="0.8" y="0.8" width="9.2" height="9" fill="#30e4ec"/><path d="M1 3H10M1 6H10" stroke="#1a3a4a" stroke-width="0.9"/><path d="M2 4.5L4 2L6 2.5L9 4.5" stroke="#1a3a4a" fill="none" stroke-width="0.8"/><path d="M1 9L4 7L6 7.5L9 6" stroke="#b030e0" fill="none" stroke-width="1"/><rect x="0.8" y="9" width="9.2" height="0.9" fill="#e05050"/></svg>
<span style="left:39px;top:335.5px;font-size:11.8px;color:#111;transform:scaleY(1.06);transform-origin:0 100%">Graph5</span>
<svg style="left:26px;top:352px;" width="12" height="12" viewBox="0 0 12 12"><rect x="1" y="1" width="11" height="11" fill="#111"/><rect x="0" y="0" width="10.5" height="10.5" fill="#777"/><rect x="0.8" y="0.8" width="9.2" height="9" fill="#30e4ec"/><path d="M1 3H10M1 6H10" stroke="#1a3a4a" stroke-width="0.9"/><path d="M2 4.5L4 2L6 2.5L9 4.5" stroke="#1a3a4a" fill="none" stroke-width="0.8"/><path d="M1 9L4 7L6 7.5L9 6" stroke="#b030e0" fill="none" stroke-width="1"/><rect x="0.8" y="9" width="9.2" height="0.9" fill="#e05050"/></svg>
<span style="left:39px;top:352.5px;font-size:11.8px;color:#111;transform:scaleY(1.06);transform-origin:0 100%">Graph6</span>
<svg style="left:26px;top:370px;" width="12" height="12" viewBox="0 0 12 12"><rect x="1" y="1" width="11" height="11" fill="#111"/><rect x="0" y="0" width="10.5" height="10.5" fill="#777"/><rect x="0.8" y="0.8" width="9.2" height="9" fill="#30e4ec"/><path d="M1 3H10M1 6H10" stroke="#1a3a4a" stroke-width="0.9"/><path d="M2 4.5L4 2L6 2.5L9 4.5" stroke="#1a3a4a" fill="none" stroke-width="0.8"/><path d="M1 9L4 7L6 7.5L9 6" stroke="#b030e0" fill="none" stroke-width="1"/><rect x="0.8" y="9" width="9.2" height="0.9" fill="#e05050"/></svg>
<span style="left:39px;top:370.5px;font-size:11.8px;color:#111;transform:scaleY(1.06);transform-origin:0 100%">Graph7</span>
<svg style="left:26px;top:388px;" width="12" height="12" viewBox="0 0 12 12"><rect x="1" y="1" width="11" height="11" fill="#111"/><rect x="0" y="0" width="10.5" height="10.5" fill="#777"/><rect x="0.8" y="0.8" width="9.2" height="9" fill="#30e4ec"/><path d="M1 3H10M1 6H10" stroke="#1a3a4a" stroke-width="0.9"/><path d="M2 4.5L4 2L6 2.5L9 4.5" stroke="#1a3a4a" fill="none" stroke-width="0.8"/><path d="M1 9L4 7L6 7.5L9 6" stroke="#b030e0" fill="none" stroke-width="1"/><rect x="0.8" y="9" width="9.2" height="0.9" fill="#e05050"/></svg>
<span style="left:39px;top:388.5px;font-size:11.8px;color:#111;transform:scaleY(1.06);transform-origin:0 100%">Graph8</span>
<svg style="left:26px;top:405px;" width="12" height="12" viewBox="0 0 12 12"><rect x="1" y="1" width="11" height="11" fill="#111"/><rect x="0" y="0" width="10.5" height="10.5" fill="#777"/><rect x="0.8" y="0.8" width="9.2" height="9" fill="#30e4ec"/><path d="M1 3H10M1 6H10" stroke="#1a3a4a" stroke-width="0.9"/><path d="M2 4.5L4 2L6 2.5L9 4.5" stroke="#1a3a4a" fill="none" stroke-width="0.8"/><path d="M1 9L4 7L6 7.5L9 6" stroke="#b030e0" fill="none" stroke-width="1"/><rect x="0.8" y="9" width="9.2" height="0.9" fill="#e05050"/></svg>
<span style="left:39px;top:405.5px;font-size:11.8px;color:#111;transform:scaleY(1.06);transform-origin:0 100%">Graph9</span>
<svg style="left:26px;top:423px;" width="12" height="12" viewBox="0 0 12 12"><rect x="1" y="1" width="11" height="11" fill="#111"/><rect x="0" y="0" width="10.5" height="10.5" fill="#777"/><rect x="0.8" y="0.8" width="9.2" height="9" fill="#30e4ec"/><path d="M1 3H10M1 6H10" stroke="#1a3a4a" stroke-width="0.9"/><path d="M2 4.5L4 2L6 2.5L9 4.5" stroke="#1a3a4a" fill="none" stroke-width="0.8"/><path d="M1 9L4 7L6 7.5L9 6" stroke="#b030e0" fill="none" stroke-width="1"/><rect x="0.8" y="9" width="9.2" height="0.9" fill="#e05050"/></svg>
<span style="left:39px;top:423.5px;font-size:11.8px;color:#111;transform:scaleY(1.06);transform-origin:0 100%">Graph10</span>
<svg style="left:26px;top:441px;" width="12" height="12" viewBox="0 0 12 12"><rect x="1" y="1" width="11" height="11" fill="#111"/><rect x="0" y="0" width="10.5" height="10.5" fill="#777"/><rect x="0.8" y="0.8" width="9.2" height="9" fill="#30e4ec"/><path d="M1 3H10M1 6H10" stroke="#1a3a4a" stroke-width="0.9"/><path d="M2 4.5L4 2L6 2.5L9 4.5" stroke="#1a3a4a" fill="none" stroke-width="0.8"/><path d="M1 9L4 7L6 7.5L9 6" stroke="#b030e0" fill="none" stroke-width="1"/><rect x="0.8" y="9" width="9.2" height="0.9" fill="#e05050"/></svg>
<span style="left:39px;top:441.5px;font-size:11.8px;color:#111;transform:scaleY(1.06);transform-origin:0 100%">Graph11</span>
<svg style="left:26px;top:458px;" width="12" height="12" viewBox="0 0 12 12"><rect x="1" y="1" width="11" height="11" fill="#111"/><rect x="0" y="0" width="10.5" height="10.5" fill="#777"/><rect x="0.8" y="0.8" width="9.2" height="9" fill="#30e4ec"/><path d="M1 3H10M1 6H10" stroke="#1a3a4a" stroke-width="0.9"/><path d="M2 4.5L4 2L6 2.5L9 4.5" stroke="#1a3a4a" fill="none" stroke-width="0.8"/><path d="M1 9L4 7L6 7.5L9 6" stroke="#b030e0" fill="none" stroke-width="1"/><rect x="0.8" y="9" width="9.2" height="0.9" fill="#e05050"/></svg>
<span style="left:39px;top:458.5px;font-size:11.8px;color:#111;transform:scaleY(1.06);transform-origin:0 100%">Graph12</span>
<svg style="left:26px;top:476px;" width="12" height="12" viewBox="0 0 12 12"><rect x="1" y="1" width="11" height="11" fill="#111"/><rect x="0" y="0" width="10.5" height="10.5" fill="#777"/><rect x="0.8" y="0.8" width="9.2" height="9" fill="#30e4ec"/><path d="M1 3H10M1 6H10" stroke="#1a3a4a" stroke-width="0.9"/><path d="M2 4.5L4 2L6 2.5L9 4.5" stroke="#1a3a4a" fill="none" stroke-width="0.8"/><path d="M1 9L4 7L6 7.5L9 6" stroke="#b030e0" fill="none" stroke-width="1"/><rect x="0.8" y="9" width="9.2" height="0.9" fill="#e05050"/></svg>
<span style="left:39px;top:476.5px;font-size:11.8px;color:#111;transform:scaleY(1.06);transform-origin:0 100%">Graph13</span>
<svg style="left:25px;top:477px;" width="13" height="13" viewBox="0 0 13 13"><rect x="0.5" y="0.5" width="11" height="11" fill="none" stroke="#d040d0"/></svg>
<div style="left:154px;top:265px;width:15px;height:225px;background:#f2f2f2"></div>
<svg style="left:158px;top:271px;" width="7" height="4" viewBox="0 0 7 4"><path d="M0 4L3.5 0L7 4Z" fill="#555"/></svg>
<div style="left:155px;top:299px;width:13px;height:172px;background:linear-gradient(90deg,#e6e6e6,#d6d6d6 60%,#cfcfcf);border:1px solid #c0c0c0;border-radius:2px;box-sizing:border-box"></div>
<svg style="left:158px;top:381px;" width="8" height="8" viewBox="0 0 8 8"><path d="M1 1.5H7M1 4H7M1 6.5H7" stroke="#777" stroke-width="0.8"/></svg>
<svg style="left:158px;top:481px;" width="7" height="4" viewBox="0 0 7 4"><path d="M0 0L3.5 4L7 0Z" fill="#555"/></svg>
<div style="left:169px;top:107px;width:7px;height:383px;background:#f0f0f0"></div>
<div style="left:176px;top:107px;width:2px;height:383px;background:#787878"></div>
<div style="left:178px;top:107px;width:545px;height:383px;background:#fff"></div>
<div style="left:723px;top:107px;width:77px;height:383px;background:#c0c0c0"></div>
<div style="left:0px;top:106px;width:800px;height:1px;background:#a0a0a0"></div>
<div style="left:0px;top:490px;width:800px;height:1px;background:#c8c8c8"></div>
<div style="left:0px;top:491px;width:800px;height:22px;background:#f0f0f0"></div>
<div style="left:3px;top:493px;width:1px;height:19px;background:#c4c4c4"></div>
<div style="left:4px;top:493px;width:1px;height:19px;background:#fff"></div>
<div style="left:6px;top:493px;width:1px;height:19px;background:#c4c4c4"></div>
<div style="left:7px;top:493px;width:1px;height:19px;background:#fff"></div>
<svg style="left:9px;top:495px;" width="15" height="15" viewBox="0 0 15 15"><path d="M0 11L10 1" stroke="#222"/></svg>
<svg style="left:27px;top:501px;" width="5" height="3" viewBox="0 0 5 3"><path d="M0 0H5L2.5 3Z" fill="#111"/></svg>
<svg style="left:37px;top:495px;" width="15" height="15" viewBox="0 0 15 15"><path d="M1 10H2.5M5 6H6.5M9 2H10.5" stroke="#111" stroke-width="2"/></svg>
<svg style="left:55px;top:501px;" width="5" height="3" viewBox="0 0 5 3"><path d="M0 0H5L2.5 3Z" fill="#111"/></svg>
<svg style="left:65px;top:495px;" width="15" height="15" viewBox="0 0 15 15"><path d="M1 10L10 1" stroke="#222"/><path d="M0 10H2.5M5 5.5H7M9 1H11" stroke="#111" stroke-width="2"/></svg>
<svg style="left:82px;top:501px;" width="5" height="3" viewBox="0 0 5 3"><path d="M0 0H5L2.5 3Z" fill="#111"/></svg>
<svg style="left:92px;top:495px;" width="15" height="15" viewBox="0 0 15 15"><path d="M0 11H12" stroke="#111"/><rect x="0.5" y="5" width="2.5" height="6" fill="#e00" stroke="#600" stroke-width="0.6"/><rect x="4" y="1" width="2.5" height="10" fill="#e00" stroke="#600" stroke-width="0.6"/><rect x="7.5" y="3" width="2.5" height="8" fill="#e00" stroke="#600" stroke-width="0.6"/></svg>
<svg style="left:110px;top:501px;" width="5" height="3" viewBox="0 0 5 3"><path d="M0 0H5L2.5 3Z" fill="#111"/></svg>
<svg style="left:119px;top:495px;" width="15" height="15" viewBox="0 0 15 15"><path d="M1 0V11H11" stroke="#333" fill="none"/><path d="M2 6L10 1M2 6L10 10M2 6H10" stroke="#3050f0" fill="none"/></svg>
<svg style="left:137px;top:501px;" width="5" height="3" viewBox="0 0 5 3"><path d="M0 0H5L2.5 3Z" fill="#111"/></svg>
<svg style="left:148px;top:495px;" width="15" height="15" viewBox="0 0 15 15"><path d="M2 0H8M5 0V10M2 10H8" stroke="#e00"/><rect x="1.5" y="3.5" width="7" height="3" fill="none" stroke="#e00"/></svg>
<svg style="left:164px;top:501px;" width="5" height="3" viewBox="0 0 5 3"><path d="M0 0H5L2.5 3Z" fill="#111"/></svg>
<svg style="left:173px;top:495px;" width="15" height="15" viewBox="0 0 15 15"><path d="M0 4L3 1L6 4L9 1L12 4V12H0Z" fill="#00d020"/><path d="M0 9L3 6L6 8L9 5L12 7V12H0Z" fill="#e00"/><path d="M0 10L3 8L6 10L9 8L12 10V12H0Z" fill="#111"/></svg>
<svg style="left:192px;top:501px;" width="5" height="3" viewBox="0 0 5 3"><path d="M0 0H5L2.5 3Z" fill="#111"/></svg>
<svg style="left:200px;top:495px;" width="15" height="15" viewBox="0 0 15 15"><path d="M0.5 1V11M11.5 1V11" stroke="#333"/><circle cx="6" cy="6" r="4.2" fill="none" stroke="#333"/><text x="4" y="9" font-size="7" font-family="Liberation Serif" fill="#333">f</text></svg>
<svg style="left:218px;top:501px;" width="5" height="3" viewBox="0 0 5 3"><path d="M0 0H5L2.5 3Z" fill="#111"/></svg>
<svg style="left:229px;top:495px;" width="15" height="15" viewBox="0 0 15 15"><path d="M3 0V12M8 0V12" stroke="#222"/><rect x="1.5" y="3.5" width="3" height="5" fill="#fff" stroke="#222"/><rect x="6.5" y="2.5" width="3" height="7" fill="#e00" stroke="#e00"/></svg>
<svg style="left:245px;top:501px;" width="5" height="3" viewBox="0 0 5 3"><path d="M0 0H5L2.5 3Z" fill="#111"/></svg>
<svg style="left:257px;top:495px;" width="15" height="15" viewBox="0 0 15 15"><rect x="0.5" y="1.5" width="10" height="9" fill="#222"/><rect x="2" y="3" width="7" height="6" fill="#f0e020"/><path d="M3 4L8 8M3 8L6 5" stroke="#e00"/></svg>
<div style="left:276px;top:491px;width:1px;height:22px;background:#c8c8c8"></div>
<div style="left:279px;top:493px;width:1px;height:19px;background:#c4c4c4"></div>
<div style="left:280px;top:493px;width:1px;height:19px;background:#fff"></div>
<div style="left:282px;top:493px;width:1px;height:19px;background:#c4c4c4"></div>
<div style="left:283px;top:493px;width:1px;height:19px;background:#fff"></div>
<svg style="left:287px;top:495px;" width="15" height="15" viewBox="0 0 15 15"><path d="M0.5 4.5L4 1H12V8.5L8.5 12H0.5Z" fill="#d8d8d8" stroke="#8c8c8c"/><path d="M0.5 4.5H8.5V12M8.5 4.5L12 1" stroke="#8c8c8c" fill="none"/><rect x="3" y="7" width="2" height="2" fill="#8c8c8c"/></svg>
<svg style="left:305px;top:501px;" width="5" height="3" viewBox="0 0 5 3"><path d="M0 0H5L2.5 3Z" fill="#aaa"/></svg>
<svg style="left:320px;top:495px;" width="15" height="15" viewBox="0 0 15 15"><rect x="1" y="4" width="8" height="8" fill="#ccc"/><path d="M1 4L4 1H12V9L9 12" stroke="#8c8c8c" fill="#ddd"/><rect x="3" y="5" width="2" height="6" fill="#eee"/></svg>
<svg style="left:338px;top:501px;" width="5" height="3" viewBox="0 0 5 3"><path d="M0 0H5L2.5 3Z" fill="#aaa"/></svg>
<svg style="left:352px;top:495px;" width="15" height="15" viewBox="0 0 15 15"><path d="M0.5 5.5L4 2H12V7.5L8.5 11H0.5Z" fill="#999" stroke="#888"/><path d="M0.5 5.5H8.5L12 2" stroke="#eee" fill="none"/></svg>
<svg style="left:371px;top:501px;" width="5" height="3" viewBox="0 0 5 3"><path d="M0 0H5L2.5 3Z" fill="#aaa"/></svg>
<svg style="left:381px;top:495px;" width="15" height="15" viewBox="0 0 15 15"><path d="M0.5 5.5L4 2H12V7.5L8.5 11H0.5Z" fill="#ddd" stroke="#8c8c8c"/><path d="M2 9L7 4M4 10L10 4" stroke="#8c8c8c"/></svg>
<svg style="left:398px;top:501px;" width="5" height="3" viewBox="0 0 5 3"><path d="M0 0H5L2.5 3Z" fill="#aaa"/></svg>
<svg style="left:407px;top:495px;" width="15" height="15" viewBox="0 0 15 15"><rect x="0" y="0" width="12" height="12" fill="#8a8a8a"/><rect x="3" y="0" width="1" height="12" fill="#f0f0f0"/><rect x="0" y="3" width="12" height="1" fill="#f0f0f0"/><rect x="6" y="0" width="1" height="12" fill="#f0f0f0"/><rect x="0" y="6" width="12" height="1" fill="#f0f0f0"/><rect x="9" y="0" width="1" height="12" fill="#f0f0f0"/><rect x="0" y="9" width="12" height="1" fill="#f0f0f0"/></svg>
<svg style="left:426px;top:501px;" width="5" height="3" viewBox="0 0 5 3"><path d="M0 0H5L2.5 3Z" fill="#aaa"/></svg>
<svg style="left:435px;top:495px;" width="15" height="15" viewBox="0 0 15 15"><rect x="0.5" y="0.5" width="11" height="11" fill="#eee" stroke="#999"/><rect x="2" y="2" width="5" height="5" fill="#888"/><rect x="5" y="5" width="5" height="5" fill="#aaa"/></svg>
<svg style="left:453px;top:501px;" width="5" height="3" viewBox="0 0 5 3"><path d="M0 0H5L2.5 3Z" fill="#aaa"/></svg>
<div style="left:314px;top:493px;width:1px;height:17px;background:#c0c0c0"></div>
<div style="left:315px;top:493px;width:1px;height:17px;background:#fdfdfd"></div>
<div style="left:347px;top:493px;width:1px;height:17px;background:#c0c0c0"></div>
<div style="left:348px;top:493px;width:1px;height:17px;background:#fdfdfd"></div>
<div style="left:465px;top:491px;width:1px;height:22px;background:#c8c8c8"></div>
<div style="left:468px;top:493px;width:1px;height:19px;background:#c4c4c4"></div>
<div style="left:469px;top:493px;width:1px;height:19px;background:#fff"></div>
<div style="left:471px;top:493px;width:1px;height:19px;background:#c4c4c4"></div>
<div style="left:472px;top:493px;width:1px;height:19px;background:#fff"></div>
<svg style="left:478px;top:495px;" width="15" height="15" viewBox="0 0 15 15"><path d="M1 0V12" stroke="#b8b8b8" stroke-dasharray="1 1"/><rect x="1.5" y="1.5" width="5" height="4" fill="none" stroke="#b8b8b8"/><rect x="1.5" y="7.5" width="9" height="4" fill="none" stroke="#b8b8b8"/></svg>
<svg style="left:495px;top:495px;" width="15" height="15" viewBox="0 0 15 15"><path d="M11 0V12" stroke="#b8b8b8" stroke-dasharray="1 1"/><rect x="5.5" y="1.5" width="5" height="4" fill="none" stroke="#b8b8b8"/><rect x="1.5" y="7.5" width="9" height="4" fill="none" stroke="#b8b8b8"/></svg>
<svg style="left:517px;top:495px;" width="15" height="15" viewBox="0 0 15 15"><path d="M0 1H12" stroke="#b8b8b8" stroke-dasharray="1 1"/><rect x="1.5" y="1.5" width="4" height="10" fill="none" stroke="#b8b8b8"/><rect x="7.5" y="1.5" width="4" height="5" fill="none" stroke="#b8b8b8"/></svg>
<svg style="left:534px;top:495px;" width="15" height="15" viewBox="0 0 15 15"><path d="M0 11H12" stroke="#b8b8b8" stroke-dasharray="1 1"/><rect x="1.5" y="1.5" width="4" height="9" fill="none" stroke="#b8b8b8"/><rect x="7.5" y="4.5" width="4" height="6" fill="none" stroke="#b8b8b8"/></svg>
<svg style="left:557px;top:495px;" width="15" height="15" viewBox="0 0 15 15"><path d="M6 0V12" stroke="#b8b8b8"/><rect x="2.5" y="2.5" width="7" height="3" fill="none" stroke="#b8b8b8"/><rect x="0.5" y="7.5" width="11" height="3" fill="none" stroke="#b8b8b8"/></svg>
<svg style="left:574px;top:495px;" width="15" height="15" viewBox="0 0 15 15"><path d="M0 6H12" stroke="#b8b8b8"/><rect x="1.5" y="2.5" width="4" height="7" fill="none" stroke="#b8b8b8"/><rect x="6.5" y="1.5" width="4" height="9" fill="none" stroke="#b8b8b8"/></svg>
<svg style="left:598px;top:495px;" width="15" height="15" viewBox="0 0 15 15"><path d="M0 1H12M0 11H12" stroke="#b8b8b8" stroke-dasharray="1 1"/><rect x="2.5" y="2.5" width="8" height="3" fill="none" stroke="#b8b8b8"/><rect x="2.5" y="7.5" width="8" height="3" fill="none" stroke="#b8b8b8"/></svg>
<svg style="left:614px;top:495px;" width="15" height="15" viewBox="0 0 15 15"><path d="M1 0V12M11 0V12" stroke="#b8b8b8" stroke-dasharray="1 1"/><rect x="2.5" y="2.5" width="3" height="8" fill="none" stroke="#b8b8b8"/><rect x="6.5" y="2.5" width="3" height="8" fill="none" stroke="#b8b8b8"/></svg>
<svg style="left:636px;top:495px;" width="15" height="15" viewBox="0 0 15 15"><rect x="0.5" y="0.5" width="7" height="7" fill="#fff" stroke="#555" stroke-width="1.4"/><rect x="4.5" y="4.5" width="7" height="7" fill="#888" stroke="#555" stroke-width="1.4"/></svg>
<svg style="left:653px;top:495px;" width="15" height="15" viewBox="0 0 15 15"><rect x="0.5" y="0.5" width="7" height="7" fill="#888" stroke="#666" stroke-width="1.4"/><rect x="4.5" y="4.5" width="7" height="7" fill="#666" stroke="#666" stroke-width="1.4"/></svg>
<svg style="left:676px;top:495px;" width="15" height="15" viewBox="0 0 15 15"><rect x="2.5" y="2.5" width="9" height="7" fill="none" stroke="#c8c8c8"/><path d="M0 6H2M12 6H14" stroke="#c8c8c8"/></svg>
<svg style="left:694px;top:495px;" width="15" height="15" viewBox="0 0 15 15"><rect x="2.5" y="2.5" width="9" height="7" fill="none" stroke="#c8c8c8"/><circle cx="7" cy="6" r="2" fill="none" stroke="#c8c8c8"/></svg>
<svg style="left:716px;top:495px;" width="15" height="15" viewBox="0 0 15 15"><rect x="2.5" y="2.5" width="9" height="9" fill="none" stroke="#333"/><rect x="0.5" y="0.5" width="7" height="7" fill="none" stroke="#333" stroke-dasharray="1.5 1"/><rect x="0" y="10" width="2" height="2" fill="#333"/><rect x="11" y="0" width="2" height="2" fill="#333"/></svg>
<svg style="left:733px;top:495px;" width="15" height="15" viewBox="0 0 15 15"><rect x="4.5" y="4.5" width="8" height="8" fill="none" stroke="#333"/><rect x="0.5" y="0.5" width="7" height="7" fill="none" stroke="#333" stroke-dasharray="1.5 1"/><rect x="0" y="0" width="2" height="2" fill="#333"/><rect x="11" y="11" width="2" height="2" fill="#333"/></svg>
<div style="left:512px;top:493px;width:1px;height:17px;background:#c0c0c0"></div>
<div style="left:513px;top:493px;width:1px;height:17px;background:#fdfdfd"></div>
<div style="left:552px;top:493px;width:1px;height:17px;background:#c0c0c0"></div>
<div style="left:553px;top:493px;width:1px;height:17px;background:#fdfdfd"></div>
<div style="left:592px;top:493px;width:1px;height:17px;background:#c0c0c0"></div>
<div style="left:593px;top:493px;width:1px;height:17px;background:#fdfdfd"></div>
<div style="left:632px;top:493px;width:1px;height:17px;background:#c0c0c0"></div>
<div style="left:633px;top:493px;width:1px;height:17px;background:#fdfdfd"></div>
<div style="left:671px;top:493px;width:1px;height:17px;background:#c0c0c0"></div>
<div style="left:672px;top:493px;width:1px;height:17px;background:#fdfdfd"></div>
<div style="left:711px;top:493px;width:1px;height:17px;background:#c0c0c0"></div>
<div style="left:712px;top:493px;width:1px;height:17px;background:#fdfdfd"></div>
<div style="left:753px;top:491px;width:1px;height:22px;background:#c8c8c8"></div>
<div style="left:0px;top:513px;width:800px;height:13px;background:#f0f0f0"></div>
<div style="left:0px;top:513px;width:800px;height:1px;background:#d4d4d4"></div>
<div style="left:0px;top:514px;width:800px;height:1px;background:#fbfbfb"></div>
<div style="left:540px;top:514px;width:1px;height:12px;background:#c8c8c8"></div>
<div style="left:679px;top:514px;width:1px;height:12px;background:#c8c8c8"></div>
<span style="left:1.8px;top:517.3px;font-size:12px;color:#111">Saving project</span>
<span style="left:82px;top:517.3px;font-size:11.1px;color:#111">污染过程1平均质谱图</span>
<span style="left:191px;top:517.3px;font-size:12px;color:#111">to D:\</span>
<span style="left:222.2px;top:517.3px;font-size:11.4px;color:#111">用户目录</span>
<span style="left:267px;top:517.3px;font-size:12px;color:#111">\</span>
<span style="left:271.2px;top:517.3px;font-size:11.4px;color:#111">我的文档</span>
<span style="left:315.8px;top:517.3px;font-size:12px;color:#111">\OriginLab\851\Autosave\</span>
<span style="left:454px;top:517.3px;font-size:11.4px;color:#111">污染过</span>
<span style="left:492.2px;top:517.3px;font-size:12px;color:#111">AU : ON</span>
<span style="left:544px;top:517.3px;font-size:12px;color:#111">biaozhunzhiputu (User)</span>
<span style="left:684px;top:517.3px;font-size:12px;color:#111">1:[Book1]Sheet1!Col(C)</span>
<div style="left:179px;top:109px;width:17px;height:17px;background:#c0c0c0;border-top:1px solid #e8e8e8;border-left:1px solid #e8e8e8;border-bottom:2px solid #808080;border-right:1px solid #a0a0a0;box-sizing:border-box"></div>
<span style="left:183.5px;top:109.5px;font-size:13px;color:#fff">1</span>
<div style="left:196px;top:108px;width:19px;height:17px;background:#b8b8b8"></div>
<span style="left:203px;top:110.5px;font-size:13px;color:#111">2</span>
<svg style="left:0;top:0" width="800" height="526" viewBox="0 0 800 526" font-family="Liberation Sans"><path d="M260.5 126.5V260.5H669" stroke="#2a2a2a" fill="none" stroke-width="1.1"/><path d="M254 251.2H260.5" stroke="#2a2a2a" stroke-width="1.1"/><path d="M254 212.7H260.5" stroke="#2a2a2a" stroke-width="1.1"/><path d="M254 174.2H260.5" stroke="#2a2a2a" stroke-width="1.1"/><path d="M254 135.7H260.5" stroke="#2a2a2a" stroke-width="1.1"/><path d="M257 231.9H260.5" stroke="#2a2a2a" stroke-width="1.1"/><path d="M257 193.4H260.5" stroke="#2a2a2a" stroke-width="1.1"/><path d="M257 154.9H260.5" stroke="#2a2a2a" stroke-width="1.1"/><path d="M294.5 260.5V265.5" stroke="#2a2a2a" stroke-width="1.1"/><path d="M335.4 260.5V265.5" stroke="#2a2a2a" stroke-width="1.1"/><path d="M376.2 260.5V265.5" stroke="#2a2a2a" stroke-width="1.1"/><path d="M417.1 260.5V265.5" stroke="#2a2a2a" stroke-width="1.1"/><path d="M457.9 260.5V265.5" stroke="#2a2a2a" stroke-width="1.1"/><path d="M498.8 260.5V265.5" stroke="#2a2a2a" stroke-width="1.1"/><path d="M539.6 260.5V265.5" stroke="#2a2a2a" stroke-width="1.1"/><path d="M580.5 260.5V265.5" stroke="#2a2a2a" stroke-width="1.1"/><path d="M621.4 260.5V265.5" stroke="#2a2a2a" stroke-width="1.1"/><path d="M662.2 260.5V265.5" stroke="#2a2a2a" stroke-width="1.1"/><path d="M274.1 260.5V263.5" stroke="#2a2a2a" stroke-width="1.1"/><path d="M314.9 260.5V263.5" stroke="#2a2a2a" stroke-width="1.1"/><path d="M355.8 260.5V263.5" stroke="#2a2a2a" stroke-width="1.1"/><path d="M396.6 260.5V263.5" stroke="#2a2a2a" stroke-width="1.1"/><path d="M437.5 260.5V263.5" stroke="#2a2a2a" stroke-width="1.1"/><path d="M478.4 260.5V263.5" stroke="#2a2a2a" stroke-width="1.1"/><path d="M519.2 260.5V263.5" stroke="#2a2a2a" stroke-width="1.1"/><path d="M560.1 260.5V263.5" stroke="#2a2a2a" stroke-width="1.1"/><path d="M600.9 260.5V263.5" stroke="#2a2a2a" stroke-width="1.1"/><path d="M641.8 260.5V263.5" stroke="#2a2a2a" stroke-width="1.1"/><text transform="translate(250.5 254.9) scale(1,1.14)" text-anchor="end" font-size="12.2" fill="#1a1a1a">0</text><text transform="translate(250.5 216.4) scale(1,1.14)" text-anchor="end" font-size="12.2" fill="#1a1a1a">200</text><text transform="translate(250.5 177.9) scale(1,1.14)" text-anchor="end" font-size="12.2" fill="#1a1a1a">400</text><text transform="translate(250.5 139.4) scale(1,1.14)" text-anchor="end" font-size="12.2" fill="#1a1a1a">600</text><text x="294.5" y="282.8" text-anchor="middle" font-size="18" fill="#111">0</text><text x="335.4" y="282.8" text-anchor="middle" font-size="18" fill="#111">30</text><text x="376.2" y="282.8" text-anchor="middle" font-size="18" fill="#111">60</text><text x="417.1" y="282.8" text-anchor="middle" font-size="18" fill="#111">90</text><text x="457.9" y="282.8" text-anchor="middle" font-size="18" fill="#111">120</text><text x="498.8" y="282.8" text-anchor="middle" font-size="18" fill="#111">150</text><text x="539.6" y="282.8" text-anchor="middle" font-size="18" fill="#111">180</text><text x="580.5" y="282.8" text-anchor="middle" font-size="18" fill="#111">210</text><text x="621.4" y="282.8" text-anchor="middle" font-size="18" fill="#111">240</text><text x="662.2" y="282.8" text-anchor="middle" font-size="18" fill="#111">270</text><text transform="translate(220.3 203) rotate(-90)" text-anchor="middle" font-size="14.8" fill="#111">C27 (NH2)</text><text transform="translate(195.4 285) rotate(-90)" text-anchor="middle" font-size="17.7" font-family="Liberation Serif" fill="#111">Signal intensity</text><rect x="294.5" y="250.5" width="341.3" height="10" fill="#000"/><path d="M294.5 250.5V251M295.5 250.5V251M296.5 250.5V251M297.5 250.0V251M298.5 250.5V251M299.5 250.5V251M300.5 249.5V251M301.5 250.0V251M302.5 250.5V251M303.5 250.5V251M304.5 250.0V251M305.5 250.5V251M306.5 250.0V251M307.5 250.5V251M308.5 250.5V251M309.5 250.5V251M310.5 250.5V251M311.5 250.5V251M312.5 250.5V251M313.5 250.5V251M314.5 250.5V251M315.5 250.0V251M316.5 250.5V251M317.5 250.5V251M318.5 249.5V251M319.5 250.0V251M320.5 250.5V251M321.5 250.5V251M322.5 250.0V251M323.5 250.0V251M324.5 250.0V251M325.5 250.5V251M326.5 250.0V251M327.5 250.0V251M328.5 250.5V251M329.5 250.5V251M330.5 250.5V251M331.5 250.5V251M332.5 250.0V251M333.5 249.5V251M334.5 250.5V251M335.5 250.5V251M336.5 250.5V251M337.5 250.5V251M338.5 250.0V251M339.5 250.5V251M340.5 250.0V251M341.5 250.5V251M342.5 250.0V251M343.5 249.5V251M344.5 250.0V251M345.5 250.5V251M346.5 250.5V251M347.5 250.0V251M348.5 250.0V251M349.5 250.0V251M350.5 250.5V251M351.5 250.5V251M352.5 250.5V251M353.5 250.0V251M354.5 250.0V251M355.5 250.5V251M356.5 250.0V251M357.5 250.5V251M358.5 250.0V251M359.5 250.5V251M360.5 250.5V251M361.5 250.0V251M362.5 250.0V251M363.5 250.5V251M364.5 249.5V251M365.5 250.5V251M366.5 250.5V251M367.5 250.0V251M368.5 250.5V251M369.5 250.5V251M370.5 250.5V251M371.5 250.5V251M372.5 249.5V251M373.5 250.5V251M374.5 250.0V251M375.5 249.5V251M376.5 250.5V251M377.5 250.5V251M378.5 250.0V251M379.5 250.5V251M380.5 250.0V251M381.5 250.5V251M382.5 250.5V251M383.5 250.0V251M384.5 250.5V251M385.5 250.5V251M386.5 250.0V251M387.5 250.5V251M388.5 250.5V251M389.5 250.0V251M390.5 250.5V251M391.5 250.5V251M392.5 249.5V251M393.5 250.5V251M394.5 250.5V251M395.5 250.5V251M396.5 250.5V251M397.5 250.5V251M398.5 250.0V251M399.5 250.5V251M400.5 249.5V251M401.5 250.0V251M402.5 250.0V251M403.5 249.5V251M404.5 249.5V251M405.5 250.5V251M406.5 250.5V251M407.5 250.0V251M408.5 250.5V251M409.5 250.0V251M410.5 250.5V251M411.5 250.0V251M412.5 249.5V251M413.5 250.5V251M414.5 250.5V251M415.5 249.5V251M416.5 250.5V251M417.5 250.5V251M418.5 250.5V251M419.5 250.0V251M420.5 250.0V251M421.5 250.5V251M422.5 250.5V251M423.5 250.0V251M424.5 250.0V251M425.5 250.5V251M426.5 250.0V251M427.5 250.0V251M428.5 250.0V251M429.5 249.5V251M430.5 250.5V251M431.5 250.5V251M432.5 250.0V251M433.5 250.5V251M434.5 250.0V251M435.5 250.5V251M436.5 250.5V251M437.5 250.5V251M438.5 250.5V251M439.5 250.5V251M440.5 250.0V251M441.5 250.5V251M442.5 250.5V251M443.5 250.5V251M444.5 250.5V251M445.5 249.5V251M446.5 250.5V251M447.5 250.5V251M448.5 250.0V251M449.5 250.5V251M450.5 250.5V251M451.5 250.5V251M452.5 249.5V251M453.5 250.5V251M454.5 250.5V251M455.5 250.5V251M456.5 250.5V251M457.5 250.5V251M458.5 250.0V251M459.5 250.5V251M460.5 250.5V251M461.5 249.5V251M462.5 250.5V251M463.5 249.5V251M464.5 250.0V251M465.5 250.5V251M466.5 250.0V251M467.5 250.5V251M468.5 250.5V251M469.5 250.0V251M470.5 250.5V251M471.5 250.5V251M472.5 250.5V251M473.5 250.5V251M474.5 250.5V251M475.5 250.5V251M476.5 250.5V251M477.5 250.0V251M478.5 250.5V251M479.5 250.5V251M480.5 250.5V251M481.5 249.5V251M482.5 250.0V251M483.5 250.5V251M484.5 250.5V251M485.5 250.5V251M486.5 250.5V251M487.5 250.5V251M488.5 250.5V251M489.5 250.0V251M490.5 250.5V251M491.5 250.0V251M492.5 250.0V251M493.5 250.5V251M494.5 250.5V251M495.5 250.0V251M496.5 249.5V251M497.5 250.0V251M498.5 250.0V251M499.5 250.0V251M500.5 250.0V251M501.5 250.0V251M502.5 250.5V251M503.5 250.5V251M504.5 249.5V251M505.5 249.5V251M506.5 249.5V251M507.5 250.0V251M508.5 249.5V251M509.5 250.0V251M510.5 250.5V251M511.5 250.5V251M512.5 250.5V251M513.5 250.5V251M514.5 250.5V251M515.5 250.5V251M516.5 250.0V251M517.5 250.5V251M518.5 250.5V251M519.5 250.5V251M520.5 250.5V251M521.5 250.5V251M522.5 250.5V251M523.5 250.5V251M524.5 250.5V251M525.5 250.5V251M526.5 250.0V251M527.5 250.5V251M528.5 250.5V251M529.5 250.5V251M530.5 250.0V251M531.5 250.5V251M532.5 250.0V251M533.5 250.5V251M534.5 250.5V251M535.5 250.0V251M536.5 250.5V251M537.5 250.5V251M538.5 249.5V251M539.5 250.5V251M540.5 250.0V251M541.5 250.5V251M542.5 250.5V251M543.5 250.0V251M544.5 250.5V251M545.5 250.5V251M546.5 250.0V251M547.5 250.5V251M548.5 250.5V251M549.5 250.5V251M550.5 250.5V251M551.5 249.5V251M552.5 250.5V251M553.5 250.5V251M554.5 250.5V251M555.5 250.5V251M556.5 250.5V251M557.5 250.5V251M558.5 250.5V251M559.5 250.5V251M560.5 250.0V251M561.5 250.5V251M562.5 250.0V251M563.5 250.5V251M564.5 250.5V251M565.5 249.5V251M566.5 250.0V251M567.5 250.5V251M568.5 250.0V251M569.5 250.5V251M570.5 250.5V251M571.5 250.0V251M572.5 250.5V251M573.5 250.5V251M574.5 250.0V251M575.5 250.0V251M576.5 250.5V251M577.5 249.5V251M578.5 250.0V251M579.5 250.5V251M580.5 250.0V251M581.5 249.5V251M582.5 250.5V251M583.5 250.0V251M584.5 249.5V251M585.5 250.5V251M586.5 250.0V251M587.5 250.5V251M588.5 250.5V251M589.5 250.5V251M590.5 249.5V251M591.5 250.5V251M592.5 250.0V251M593.5 250.0V251M594.5 249.5V251M595.5 250.0V251M596.5 250.5V251M597.5 250.0V251M598.5 250.5V251M599.5 250.0V251M600.5 249.5V251M601.5 249.5V251M602.5 249.5V251M603.5 249.5V251M604.5 250.5V251M605.5 249.5V251M606.5 250.5V251M607.5 249.5V251M608.5 250.5V251M609.5 250.0V251M610.5 249.5V251M611.5 250.5V251M612.5 250.5V251M613.5 250.0V251M614.5 250.5V251M615.5 250.5V251M616.5 250.0V251M617.5 250.5V251M618.5 250.5V251M619.5 249.5V251M620.5 250.5V251M621.5 250.5V251M622.5 250.5V251M623.5 250.5V251M624.5 250.0V251M625.5 250.0V251M626.5 250.5V251M627.5 250.5V251M628.5 249.5V251M629.5 250.0V251M630.5 250.5V251M631.5 250.5V251M632.5 250.5V251M633.5 250.5V251M634.5 250.5V251" stroke="#000" stroke-width="1"/><path d="M330.9 237.7V252" stroke="#000" stroke-width="1.4"/><path d="M342.5 246V252" stroke="#000" stroke-width="1.4"/><path d="M344.5 237.7V252" stroke="#000" stroke-width="1.2"/><path d="M345.5 242V252" stroke="#000" stroke-width="1.2"/><path d="M346.9 136.2V252" stroke="#000" stroke-width="1.4"/><path d="M350 246.4V252" stroke="#000" stroke-width="1.3"/><path d="M353 243.2V252" stroke="#000" stroke-width="1.3"/><path d="M362.9 243.8V252" stroke="#000" stroke-width="1.3"/><path d="M364 239.4V252" stroke="#000" stroke-width="1.3"/><path d="M373 239.4V252" stroke="#000" stroke-width="1.3"/><path d="M374.6 149V252" stroke="#000" stroke-width="1.4"/><path d="M376.3 244.2V252" stroke="#000" stroke-width="1.2"/><path d="M380.2 241.4V252" stroke="#000" stroke-width="1.3"/><path d="M398.7 248.5V252" stroke="#000" stroke-width="1"/><path d="M443.8 247V252" stroke="#000" stroke-width="1"/><rect x="481.5" y="139.5" width="64" height="33" fill="none" stroke="#f04848" stroke-width="1"/><path d="M554.5 156H569M561.8 148.7V163" stroke="#000" stroke-width="2.2"/><path d="M260.5 298.6V433.5H669" stroke="#2a2a2a" fill="none" stroke-width="1.1"/><path d="M254 419.3H260.5" stroke="#2a2a2a" stroke-width="1.1"/><path d="M254 392.6H260.5" stroke="#2a2a2a" stroke-width="1.1"/><path d="M254 365.8H260.5" stroke="#2a2a2a" stroke-width="1.1"/><path d="M254 339.1H260.5" stroke="#2a2a2a" stroke-width="1.1"/><path d="M254 312.3H260.5" stroke="#2a2a2a" stroke-width="1.1"/><path d="M257 405.9H260.5" stroke="#2a2a2a" stroke-width="1.1"/><path d="M257 379.2H260.5" stroke="#2a2a2a" stroke-width="1.1"/><path d="M257 352.4H260.5" stroke="#2a2a2a" stroke-width="1.1"/><path d="M257 325.7H260.5" stroke="#2a2a2a" stroke-width="1.1"/><path d="M257 298.9H260.5" stroke="#2a2a2a" stroke-width="1.1"/><path d="M294.5 433.5V438.5" stroke="#2a2a2a" stroke-width="1.1"/><path d="M335.4 433.5V438.5" stroke="#2a2a2a" stroke-width="1.1"/><path d="M376.2 433.5V438.5" stroke="#2a2a2a" stroke-width="1.1"/><path d="M417.1 433.5V438.5" stroke="#2a2a2a" stroke-width="1.1"/><path d="M457.9 433.5V438.5" stroke="#2a2a2a" stroke-width="1.1"/><path d="M498.8 433.5V438.5" stroke="#2a2a2a" stroke-width="1.1"/><path d="M539.6 433.5V438.5" stroke="#2a2a2a" stroke-width="1.1"/><path d="M580.5 433.5V438.5" stroke="#2a2a2a" stroke-width="1.1"/><path d="M621.4 433.5V438.5" stroke="#2a2a2a" stroke-width="1.1"/><path d="M662.2 433.5V438.5" stroke="#2a2a2a" stroke-width="1.1"/><path d="M274.1 433.5V436.5" stroke="#2a2a2a" stroke-width="1.1"/><path d="M314.9 433.5V436.5" stroke="#2a2a2a" stroke-width="1.1"/><path d="M355.8 433.5V436.5" stroke="#2a2a2a" stroke-width="1.1"/><path d="M396.6 433.5V436.5" stroke="#2a2a2a" stroke-width="1.1"/><path d="M437.5 433.5V436.5" stroke="#2a2a2a" stroke-width="1.1"/><path d="M478.4 433.5V436.5" stroke="#2a2a2a" stroke-width="1.1"/><path d="M519.2 433.5V436.5" stroke="#2a2a2a" stroke-width="1.1"/><path d="M560.1 433.5V436.5" stroke="#2a2a2a" stroke-width="1.1"/><path d="M600.9 433.5V436.5" stroke="#2a2a2a" stroke-width="1.1"/><path d="M641.8 433.5V436.5" stroke="#2a2a2a" stroke-width="1.1"/><text transform="translate(250.5 423.0) scale(1,1.14)" text-anchor="end" font-size="12.2" fill="#1a1a1a">0</text><text transform="translate(250.5 396.2) scale(1,1.14)" text-anchor="end" font-size="12.2" fill="#1a1a1a">500</text><text transform="translate(250.5 369.5) scale(1,1.14)" text-anchor="end" font-size="12.2" fill="#1a1a1a">1000</text><text transform="translate(250.5 342.8) scale(1,1.14)" text-anchor="end" font-size="12.2" fill="#1a1a1a">1500</text><text transform="translate(250.5 316.0) scale(1,1.14)" text-anchor="end" font-size="12.2" fill="#1a1a1a">2000</text><text x="294.5" y="456" text-anchor="middle" font-size="18" fill="#111">0</text><text x="335.4" y="456" text-anchor="middle" font-size="18" fill="#111">30</text><text x="376.2" y="456" text-anchor="middle" font-size="18" fill="#111">60</text><text x="417.1" y="456" text-anchor="middle" font-size="18" fill="#111">90</text><text x="457.9" y="456" text-anchor="middle" font-size="18" fill="#111">120</text><text x="498.8" y="456" text-anchor="middle" font-size="18" fill="#111">150</text><text x="539.6" y="456" text-anchor="middle" font-size="18" fill="#111">180</text><text x="580.5" y="456" text-anchor="middle" font-size="18" fill="#111">210</text><text x="621.4" y="456" text-anchor="middle" font-size="18" fill="#111">240</text><text x="662.2" y="456" text-anchor="middle" font-size="18" fill="#111">270</text><text x="464.1" y="483" text-anchor="middle" font-size="14.8" fill="#111">Row Numbers</text><rect x="294.9" y="417" width="341" height="16.5" fill="#000"/><rect x="292.6" y="417" width="4" height="6" fill="#000"/><rect x="632" y="417" width="7" height="6" fill="#000"/><rect x="339" y="414.5" width="7" height="5" fill="#000"/><rect x="348" y="414.8" width="4" height="5" fill="#000"/><rect x="371.6" y="413.1" width="6.399999999999977" height="5" fill="#000"/><rect x="388" y="415.5" width="6" height="5" fill="#000"/><rect x="394" y="414.2" width="6" height="5" fill="#000"/><rect x="400" y="410.3" width="8" height="5" fill="#000"/><rect x="410" y="414.5" width="8" height="5" fill="#000"/><rect x="420" y="415" width="5" height="5" fill="#000"/><rect x="425" y="414.2" width="7" height="5" fill="#000"/><rect x="432" y="416" width="6" height="5" fill="#000"/><rect x="439" y="414.5" width="7" height="5" fill="#000"/><rect x="448" y="411.8" width="6" height="5" fill="#000"/><path d="M329.7 406.6V418" stroke="#000" stroke-width="1.5"/><rect x="326.59999999999997" y="403.6" width="6.2" height="6" fill="#000"/><path d="M351.8 411.6V418" stroke="#000" stroke-width="1.5"/><rect x="348.7" y="408.6" width="6.2" height="6" fill="#000"/><path d="M357 405.1V418" stroke="#000" stroke-width="1.5"/><rect x="353.9" y="402.1" width="6.2" height="6" fill="#000"/><path d="M379.4 398.3V418" stroke="#000" stroke-width="1.5"/><rect x="376.29999999999995" y="395.3" width="6.2" height="6" fill="#000"/><path d="M426.4 312.2V418" stroke="#000" stroke-width="1.5"/><rect x="423.29999999999995" y="309.2" width="6.2" height="6" fill="#000"/><rect x="513.3" y="303.9" width="5.5" height="5" fill="#000"/><rect x="557" y="308.5" width="8" height="2" fill="#000"/></svg>
<div style="left:718px;top:410px;width:82px;height:18px;background:#fff;border:1px solid #cfd8e6;border-right:none;box-sizing:border-box"></div>
<svg style="left:697px;top:407px;" width="24" height="23" viewBox="0 0 24 23"><g transform="rotate(-10 12 11.5)"><rect x="2.5" y="2" width="18" height="18" rx="3" fill="#ee5a24"/><path d="M16 6.5Q13 5 9 6Q6 7.5 8 10Q10 12 14 12.5Q16.5 13.5 14 16Q11 17 7 15.5" stroke="#fff" stroke-width="2.6" fill="none" stroke-linecap="round"/></g></svg>
<span style="left:722px;top:413px;font-size:12.5px;color:#2a66c0;font-weight:bold">英</span>
<svg style="left:739px;top:413px;" width="11" height="12" viewBox="0 0 11 12"><circle cx="5.5" cy="6.5" r="5" fill="#2a66c0"/><circle cx="2.8" cy="3.8" r="4.6" fill="#fff"/></svg>
<svg style="left:757px;top:414px;" width="9" height="10" viewBox="0 0 9 10"><circle cx="2" cy="2.5" r="1.5" fill="#2a66c0"/><path d="M6.5 5Q7 8 4.5 9.5" stroke="#2a66c0" stroke-width="1.8" fill="none"/></svg>
<svg style="left:771px;top:414px;" width="13" height="10" viewBox="0 0 13 10"><rect x="0" y="0" width="12" height="9" fill="#3a7ad0"/><rect x="1.5" y="1.5" width="9" height="6" fill="#fff"/><path d="M2.5 3.5H9.5M2.5 5.5H9.5" stroke="#3a7ad0" stroke-dasharray="1 0.8"/></svg>
<svg style="left:787px;top:413px;" width="13" height="14" viewBox="0 0 13 14"><circle cx="6" cy="3.5" r="2.8" fill="#a8b4c4"/><path d="M0.5 12Q0.5 7 6 7Q11.5 7 11.5 12Z" fill="#a8b4c4"/><path d="M8 12L11 9" stroke="#fff" stroke-width="1.5"/></svg>
</body></html>
